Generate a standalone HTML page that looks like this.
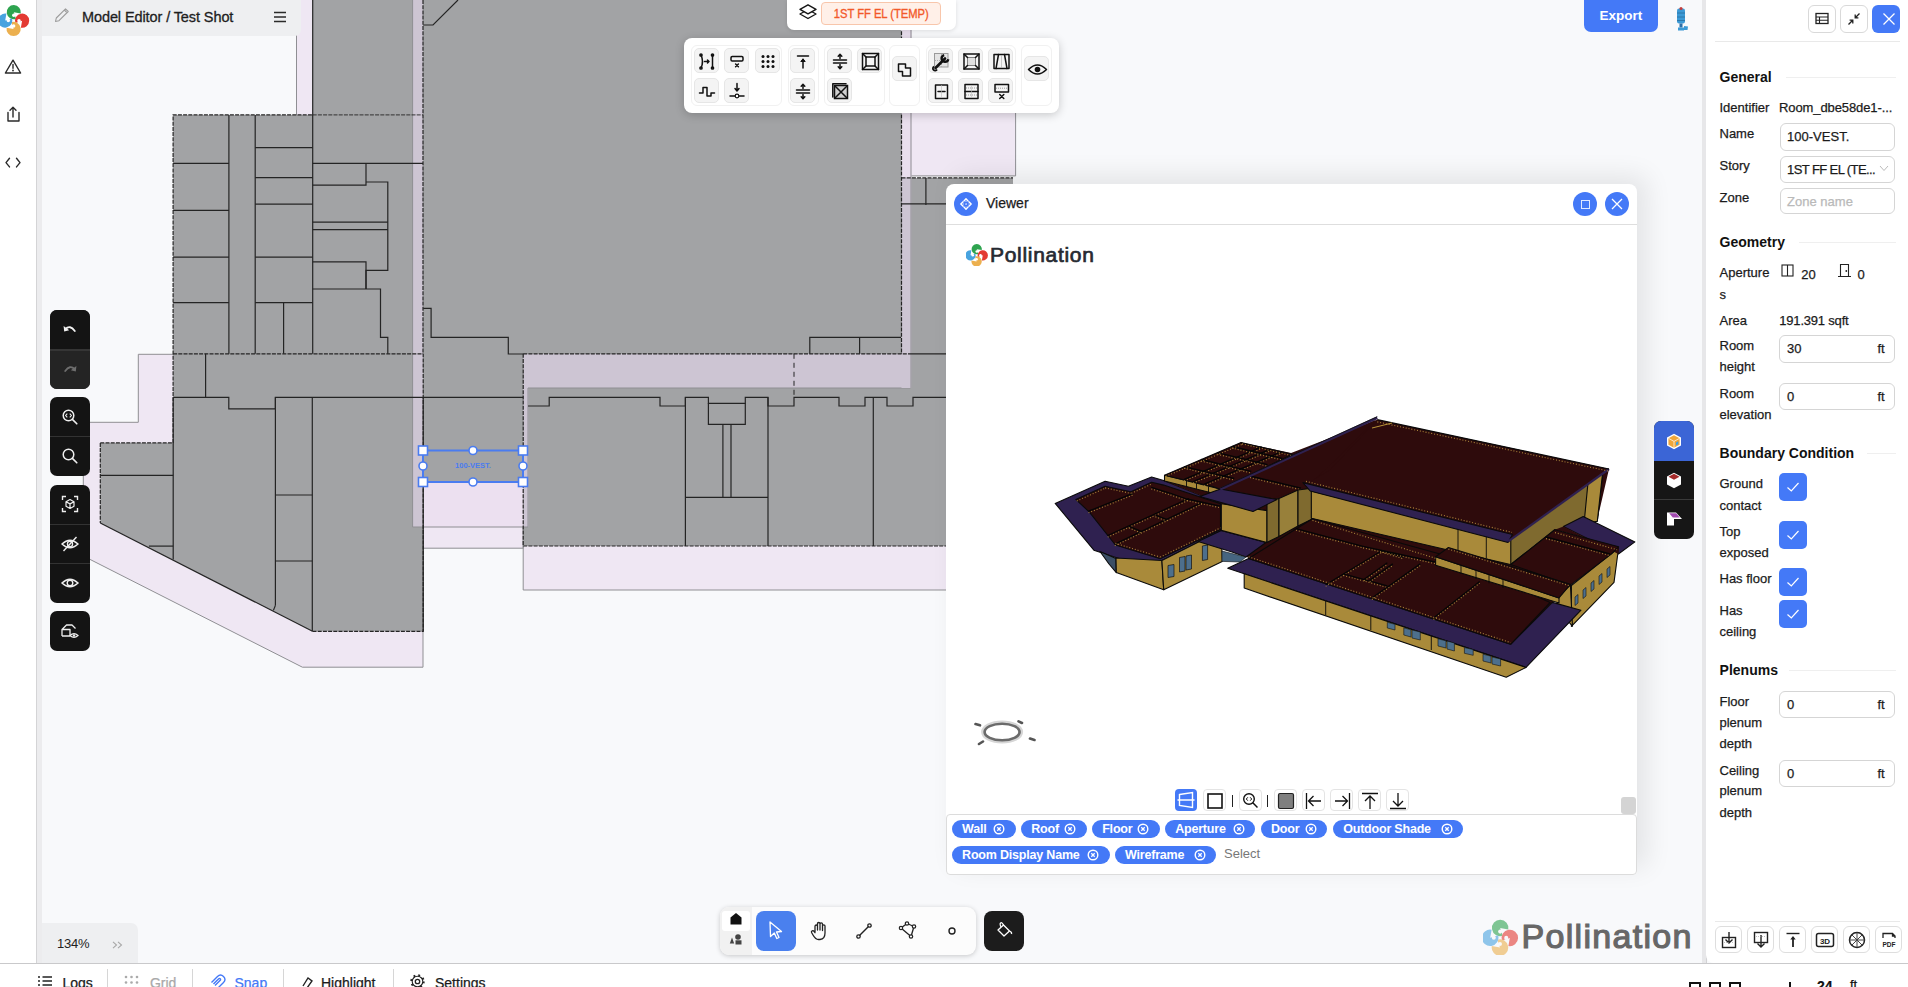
<!DOCTYPE html>
<html><head><meta charset="utf-8">
<style>
*{box-sizing:border-box;margin:0;padding:0}
html,body{width:1908px;height:987px;overflow:hidden;background:#f8f9fb;font-family:"Liberation Sans",sans-serif;color:#1b1b1b;position:relative}
.abs{position:absolute}
svg{display:block}
#sidebar{left:0;top:0;width:37px;height:963px;background:#fff;border-right:1px solid #d4d4d6}
#sidestrip{left:37px;top:0;width:5px;height:963px;background:#ececee}
#plan{left:0;top:0}
#hdr{left:42px;top:0;width:259px;height:36px;background:#eeeff1;border-bottom-right-radius:6px}
#hdr .t{position:absolute;left:40px;top:9px;font-size:14.5px;color:#1e1e1e;letter-spacing:-0.1px;white-space:nowrap;-webkit-text-stroke:0.3px #1e1e1e}
#story{left:787px;top:0;width:169px;height:30px;background:#fff;border-bottom-left-radius:7px;border-bottom-right-radius:7px;box-shadow:0 1px 4px rgba(0,0,0,.12)}
#badge{position:absolute;left:34px;top:2px;width:120px;height:23px;background:#fff0e8;border:1px solid #f8c6ab;border-radius:4px;color:#f2592a;font-size:13px;text-align:center;line-height:21px;white-space:nowrap}
#tools{left:684px;top:38px;width:375px;height:75px;background:#fff;border-radius:8px;box-shadow:0 2px 10px rgba(0,0,0,.2)}
.tg{position:absolute;top:7px;height:61px;border:1px solid #f1f1f1;border-radius:6px}
.tb{position:absolute;width:25px;height:25px;background:#f4f4f4;border:1px solid #e6e6e6;border-radius:5px}
.tb svg{position:absolute;left:2px;top:2px}
#viewer{left:946px;top:184px;width:691px;height:691px;background:#fff;border-radius:8px 8px 4px 4px;box-shadow:10px -8px 26px rgba(0,0,0,.085)}
#rpanel{left:1706px;top:0;width:202px;height:963px;background:#fff;border-bottom-left-radius:8px}
#rstrip{left:1702px;top:0;width:5px;height:963px;background:#e7e7e9;border-right:1px solid #d2d2d4}
#status{left:0;top:963px;width:1908px;height:24px;background:#fff;border-top:1px solid #c9c9cb}
#zoomb{left:42px;top:923px;width:96px;height:40px;background:#eeeff1;border-top-right-radius:7px}
#export{left:1584px;top:0;width:74px;height:32px;background:#4479f7;border-radius:0 0 7px 7px;color:#fff;font-size:13.5px;font-weight:bold;text-align:center;line-height:32px}
.lg{position:absolute;left:50px;width:40px;background:#141414;border-radius:7px;overflow:hidden}
.lb{position:relative;height:39px;display:flex;align-items:center;justify-content:center}
.lb + .lb{border-top:1px solid #333}
#btools{left:720px;top:907px;width:256px;height:48px;background:#fcfcfc;border-radius:9px;box-shadow:0 1px 5px rgba(0,0,0,.2)}
#paint{left:984px;top:911px;width:40px;height:40px;background:#1c1c1c;border-radius:8px}
#vgroup{left:1654px;top:421px;width:40px;height:118px;background:#161616;border-radius:7px;overflow:hidden}
.vb{position:absolute;top:605px;width:23px;height:22px;border:1px solid #e4e4e4;border-radius:4px;background:#fff}
.vb svg{position:absolute;left:0;top:0}
.tag{position:absolute;height:17.7px;background:#4479f7;border-radius:9px;color:#fff;font-size:12.5px;font-weight:bold;display:flex;align-items:center;justify-content:space-between;padding:0 10.5px 0 10px;white-space:nowrap;letter-spacing:-0.2px}
.tag svg{flex:none}
</style></head><body>
<svg id="plan" class="abs" width="1908" height="987" viewBox="0 0 1908 987">
<polygon points="138.3,354.3 423,354.3 423,667.2 302.4,667.2 83.3,556 83.3,422.3 138.3,422.3" fill="#efe7f3" stroke="#8f8f93" stroke-width="1" />
<rect x="296" y="0" width="17" height="115" fill="#efe7f3" />
<line x1="296.5" y1="0" x2="296.5" y2="115" stroke="#8f8f93" stroke-width="1" />
<polygon points="902.6,60 1015.6,60 1015.6,175.9 902.6,175.9" fill="#efe7f3" stroke="#8f8f93" stroke-width="1" />
<polygon points="423.2,482 523.2,482 523.2,590 1000,590 1000,540 523.2,540 523.2,548.2 423.2,548.2" fill="#efe7f3" stroke="#8f8f93" stroke-width="1" />
<rect x="423.2" y="482.3" width="100" height="45" fill="#ece0f0" />
<line x1="423.2" y1="527" x2="523.2" y2="527" stroke="#8f8f93" stroke-width="1" />
<polygon points="173.1,114.9 312.7,114.9 312.7,0 901.5,0 901.5,177.9 1013,177.9 1013,546 523.2,546 523.2,482.3 423.2,482.3 423.2,631.3 312.5,631.3 100.3,523 100.3,442.9 173.2,442.9" fill="#a2a3a5" stroke="none" stroke-width="1" />
<rect x="412.6" y="0" width="10.4" height="527" fill="#cdc5d3" />
<line x1="412.6" y1="0" x2="412.6" y2="527" stroke="#8f8f93" stroke-width="1" />
<line x1="412.6" y1="527" x2="423.2" y2="527" stroke="#8f8f93" stroke-width="1" />
<rect x="523.2" y="354" width="387" height="34" fill="#cdc5d3" />
<rect x="523.2" y="388" width="5.3" height="139" fill="#cdc5d3" />
<line x1="528" y1="388" x2="910.5" y2="388" stroke="#8f8f93" stroke-width="1" />
<line x1="528" y1="388" x2="528" y2="527" stroke="#8f8f93" stroke-width="1" />
<line x1="523.2" y1="527" x2="528" y2="527" stroke="#8f8f93" stroke-width="1" />
<rect x="901.5" y="0" width="10" height="178" fill="#e9deed" />
<rect x="901.5" y="178" width="10" height="210" fill="#cdc5d3" />
<line x1="911" y1="0" x2="911" y2="388" stroke="#8f8f93" stroke-width="1" />
<polyline points="173.1,442.9 173.1,114.9 312.7,114.9" fill="none" stroke="#242424" stroke-width="1.2" stroke-dasharray="4 1.2"/>
<line x1="100.3" y1="442.9" x2="173.2" y2="442.9" stroke="#242424" stroke-width="1.2" stroke-dasharray="4 1.2"/>
<line x1="100.3" y1="442.9" x2="100.3" y2="523" stroke="#242424" stroke-width="1.2" stroke-dasharray="4 1.2"/>
<line x1="100.3" y1="523" x2="312.5" y2="631.3" stroke="#242424" stroke-width="1.2" />
<polyline points="312.5,631.3 423.2,631.3 423.2,354" fill="none" stroke="#242424" stroke-width="1.2" stroke-dasharray="4 1.2"/>
<line x1="312.7" y1="0" x2="312.7" y2="114.9" stroke="#242424" stroke-width="1.2" />
<line x1="312.7" y1="114.9" x2="423" y2="114.9" stroke="#242424" stroke-width="0.9" stroke-dasharray="4 1.2"/>
<line x1="423" y1="0" x2="423" y2="354" stroke="#242424" stroke-width="1.2" stroke-dasharray="4 1.2"/>
<line x1="173.1" y1="353.8" x2="423" y2="353.8" stroke="#242424" stroke-width="1.2" stroke-dasharray="4 1.2"/>
<line x1="523.2" y1="353.8" x2="910" y2="353.8" stroke="#242424" stroke-width="1.2" stroke-dasharray="4 1.2"/>
<line x1="523.2" y1="353.8" x2="523.2" y2="546" stroke="#242424" stroke-width="1.2" stroke-dasharray="4 1.2"/>
<line x1="523.2" y1="546" x2="946" y2="546" stroke="#242424" stroke-width="1.2" stroke-dasharray="4 1.2"/>
<line x1="901.5" y1="0" x2="901.5" y2="354" stroke="#242424" stroke-width="1.2" stroke-dasharray="4 1.2"/>
<line x1="901.5" y1="177.9" x2="1013" y2="177.9" stroke="#242424" stroke-width="1.2" stroke-dasharray="4 1.2"/>
<line x1="228.9" y1="114.9" x2="228.9" y2="353.8" stroke="#242424" stroke-width="1.2" />
<line x1="255.2" y1="114.9" x2="255.2" y2="353.8" stroke="#242424" stroke-width="1.2" />
<line x1="312.7" y1="114.9" x2="312.7" y2="353.8" stroke="#242424" stroke-width="1.2" />
<line x1="173.1" y1="163.4" x2="228.9" y2="163.4" stroke="#242424" stroke-width="1.2" />
<line x1="173.1" y1="210.4" x2="228.9" y2="210.4" stroke="#242424" stroke-width="1.2" />
<line x1="173.1" y1="257.1" x2="228.9" y2="257.1" stroke="#242424" stroke-width="1.2" />
<line x1="173.1" y1="302.7" x2="228.9" y2="302.7" stroke="#242424" stroke-width="1.2" />
<line x1="255.2" y1="147.7" x2="312.7" y2="147.7" stroke="#242424" stroke-width="1.2" />
<line x1="255.2" y1="177.6" x2="312.7" y2="177.6" stroke="#242424" stroke-width="1.2" />
<line x1="255.2" y1="204.2" x2="312.7" y2="204.2" stroke="#242424" stroke-width="1.2" />
<line x1="255.2" y1="257.1" x2="312.7" y2="257.1" stroke="#242424" stroke-width="1.2" />
<line x1="255.2" y1="302.7" x2="312.7" y2="302.7" stroke="#242424" stroke-width="1.2" />
<line x1="283.6" y1="302.7" x2="283.6" y2="353.8" stroke="#242424" stroke-width="1.2" />
<line x1="312.7" y1="163.3" x2="423" y2="163.3" stroke="#242424" stroke-width="1.2" />
<polyline points="312.7,185.2 366,185.2 366,163.3" fill="none" stroke="#242424" stroke-width="1.2" />
<polyline points="366,182 387.8,182 387.8,270.3 366,270.3 366,289" fill="none" stroke="#242424" stroke-width="1.2" />
<line x1="312.7" y1="222.1" x2="387.8" y2="222.1" stroke="#242424" stroke-width="1.2" />
<line x1="312.7" y1="229.7" x2="387.8" y2="229.7" stroke="#242424" stroke-width="1.2" />
<polyline points="312.7,261.8 366,261.8 366,289" fill="none" stroke="#242424" stroke-width="1.2" />
<polyline points="312.7,289 380.5,289 380.5,337.3 387.8,337.3 387.8,353.8" fill="none" stroke="#242424" stroke-width="1.2" />
<polyline points="423.2,25 433,25 458,0" fill="none" stroke="#242424" stroke-width="1.2" />
<polyline points="423.2,308.3 431.1,308.3 431.1,337.3 508.3,337.3 508.3,354 523.2,354" fill="none" stroke="#242424" stroke-width="1.2" />
<polyline points="809.8,353.8 809.8,337.4 901,337.4" fill="none" stroke="#242424" stroke-width="1.2" />
<line x1="859.6" y1="337.4" x2="859.6" y2="353.8" stroke="#242424" stroke-width="1.2" />
<line x1="910" y1="353.8" x2="946" y2="353.8" stroke="#242424" stroke-width="1.2" />
<line x1="205.6" y1="353.8" x2="205.6" y2="397.3" stroke="#242424" stroke-width="1.2" />
<polyline points="173.1,397.3 228.8,397.3 228.8,408.9 275.4,408.9 275.4,397.3 523.2,397.3" fill="none" stroke="#242424" stroke-width="1.2" />
<line x1="275.4" y1="397.3" x2="275.4" y2="605.4" stroke="#242424" stroke-width="1.2" />
<line x1="275.4" y1="605.4" x2="273.4" y2="610.4" stroke="#242424" stroke-width="1.2" />
<line x1="312.3" y1="397.3" x2="312.3" y2="631.3" stroke="#242424" stroke-width="1.2" />
<line x1="275.4" y1="495" x2="312.3" y2="495" stroke="#242424" stroke-width="1.2" />
<line x1="275.4" y1="561" x2="312.3" y2="561" stroke="#242424" stroke-width="1.2" />
<line x1="173.2" y1="397.3" x2="173.2" y2="559.4" stroke="#242424" stroke-width="1.2" />
<line x1="148.9" y1="546.1" x2="173.2" y2="546.1" stroke="#242424" stroke-width="1.2" />
<line x1="100.3" y1="475.3" x2="173.2" y2="475.3" stroke="#242424" stroke-width="1.2" />
<line x1="423.2" y1="397.3" x2="423.2" y2="631.3" stroke="#242424" stroke-width="1.2" />
<polyline points="528,406 549.2,406 549.2,397.3 660,397.3 660,406 685.4,406 685.4,397.3 708.4,397.3 708.4,403.3 745.3,403.3 745.3,397.3 768,397.3 768,406 794,406 794,397.3 839,397.3 839,406 865,406 865,397.3 887,397.3 887,406 913,406 913,397.3 946,397.3" fill="none" stroke="#242424" stroke-width="1.2" />
<line x1="794" y1="353.8" x2="794" y2="397.3" stroke="#242424" stroke-width="1" stroke-dasharray="5 4"/>
<line x1="685.4" y1="397.3" x2="685.4" y2="546" stroke="#242424" stroke-width="1.2" />
<line x1="768" y1="397.3" x2="768" y2="546" stroke="#242424" stroke-width="1.2" />
<line x1="873.3" y1="397.3" x2="873.3" y2="546" stroke="#242424" stroke-width="1.2" />
<polyline points="708.4,403.3 708.4,424.3 745.3,424.3 745.3,403.3" fill="none" stroke="#242424" stroke-width="1.2" />
<line x1="722.9" y1="424.3" x2="722.9" y2="497.4" stroke="#242424" stroke-width="1.2" />
<line x1="731" y1="424.3" x2="731" y2="497.4" stroke="#242424" stroke-width="1.2" />
<line x1="685.4" y1="497.4" x2="768" y2="497.4" stroke="#242424" stroke-width="1.2" />
<line x1="925.9" y1="177.9" x2="925.9" y2="205" stroke="#242424" stroke-width="1.2" />
<line x1="901.5" y1="203.9" x2="946" y2="203.9" stroke="#242424" stroke-width="1.2" />
<rect x="423" y="450.5" width="100" height="31.5" fill="none" stroke="#4a7cf0" stroke-width="2"/>
<rect x="418.5" y="446.0" width="9" height="9" fill="#fff" stroke="#4a7cf0" stroke-width="1.6"/>
<rect x="518.5" y="446.0" width="9" height="9" fill="#fff" stroke="#4a7cf0" stroke-width="1.6"/>
<rect x="418.5" y="477.5" width="9" height="9" fill="#fff" stroke="#4a7cf0" stroke-width="1.6"/>
<rect x="518.5" y="477.5" width="9" height="9" fill="#fff" stroke="#4a7cf0" stroke-width="1.6"/>
<circle cx="473" cy="450.5" r="4" fill="#fff" stroke="#4a7cf0" stroke-width="1.6"/>
<circle cx="473" cy="482" r="4" fill="#fff" stroke="#4a7cf0" stroke-width="1.6"/>
<circle cx="423" cy="466" r="4" fill="#fff" stroke="#4a7cf0" stroke-width="1.6"/>
<circle cx="523" cy="466" r="4" fill="#fff" stroke="#4a7cf0" stroke-width="1.6"/>
<text x="473" y="468" font-family="Liberation Sans" font-size="7.5" font-weight="bold" fill="#4a7cf0" text-anchor="middle">100-VEST.</text>
</svg>
<div id="sidebar" class="abs">
 <svg width="37" height="180" viewBox="0 0 37 180">
  <g><path d="M13.80 12.20 L15.99 18.95 A7.1 7.1 0 1 1 20.79 13.43 Z" fill="#2ea44f"/><circle cx="13.80" cy="15.30" r="1.75" fill="#fff"/><path d="M22.10 20.70 L15.35 22.89 A7.1 7.1 0 1 1 20.87 27.69 Z" fill="#e33a32"/><circle cx="19.00" cy="20.70" r="1.75" fill="#fff"/><path d="M13.60 29.00 L11.41 22.25 A7.1 7.1 0 1 1 6.61 27.77 Z" fill="#ecb04f"/><circle cx="13.60" cy="25.90" r="1.75" fill="#fff"/><path d="M5.20 20.60 L11.95 18.41 A7.1 7.1 0 1 1 6.43 13.61 Z" fill="#48a3df"/><circle cx="8.30" cy="20.60" r="1.75" fill="#fff"/></g>
  <g fill="none" stroke="#2a2a2a" stroke-width="1.4" stroke-linejoin="round" stroke-linecap="round">
   <path d="M13 60.2 L20.6 73 H5.4 Z"/>
   <path d="M13 64.5 V68.2"/>
   <path d="M8 112.5 V121 H19 V112.5" /><path d="M13 117 V107.5 M10 110.3 L13 107.3 L16 110.3"/>
   <path d="M9.5 158.3 L6 162.6 L9.5 166.9 M16.5 158.3 L20 162.6 L16.5 166.9"/>
  </g>
  <circle cx="13" cy="70.5" r="0.9" fill="#2a2a2a"/>
 </svg>
</div>
<div id="sidestrip" class="abs"></div>
<div id="hdr" class="abs">
 <svg class="abs" style="left:11px;top:6px" width="18" height="18" viewBox="0 0 18 18"><path d="M2.5 15.5 L3.3 12 L12.5 2.8 L15.2 5.5 L6 14.7 Z M11.3 4 L14 6.7" fill="none" stroke="#9c9c9c" stroke-width="1.1" stroke-linejoin="round"/></svg>
 <div class="t">Model Editor / Test Shot</div>
 <svg class="abs" style="left:231px;top:11px" width="14" height="12" viewBox="0 0 14 12"><path d="M1 1.5H13M1 6H13M1 10.5H13" stroke="#2a2a2a" stroke-width="1.3"/></svg>
</div>
<div id="story" class="abs">
 <svg class="abs" style="left:11px;top:3px" width="20" height="18" viewBox="0 0 20 18"><path d="M10 6.5 L18 11 L10 15.5 L2 11 Z" fill="#fff" stroke="#151515" stroke-width="1.4" stroke-linejoin="round"/><path d="M10 1.8 L18 6.3 L10 10.8 L2 6.3 Z" fill="#fff" stroke="#151515" stroke-width="1.4" stroke-linejoin="round"/></svg>
 <div id="badge"><span style="display:inline-block;transform:scaleX(0.86);transform-origin:center;-webkit-text-stroke:0.35px #f2592a;position:relative;top:-0.5px">1ST FF EL (TEMP)</span></div>
</div>
<div id="tools" class="abs"><div class="tg" style="left:7.4px;width:91px"></div>
<div class="tg" style="left:103.6px;width:31px"></div>
<div class="tg" style="left:139.5px;width:61px"></div>
<div class="tg" style="left:205px;width:31px"></div>
<div class="tg" style="left:241.5px;width:90.5px"></div>
<div class="tg" style="left:337.3px;width:31px"></div>
<div class="tb" style="left:10.4px;top:10.4px"><svg width="21" height="21" viewBox="0 0 21 21"><path d="M4 4 Q7 10.5 4 17" fill="none" stroke="#111" stroke-width="1.5" stroke-linecap="round" stroke-linejoin="round"/><circle cx="4" cy="4" r="1.1" fill="none" stroke="#111" stroke-width="1.5" stroke-linecap="round" stroke-linejoin="round"/><circle cx="4" cy="17" r="1.1" fill="none" stroke="#111" stroke-width="1.5" stroke-linecap="round" stroke-linejoin="round"/><path d="M7.5 10.5 H12 M10.5 9 L12 10.5 L10.5 12" fill="none" stroke="#111" stroke-width="1.5" stroke-linecap="round" stroke-linejoin="round" stroke-width="1.1"/><path d="M15.5 4 V17" fill="none" stroke="#111" stroke-width="1.5" stroke-linecap="round" stroke-linejoin="round"/><circle cx="15.5" cy="4" r="1.1" fill="none" stroke="#111" stroke-width="1.5" stroke-linecap="round" stroke-linejoin="round"/><circle cx="15.5" cy="17" r="1.1" fill="none" stroke="#111" stroke-width="1.5" stroke-linecap="round" stroke-linejoin="round"/></svg></div>
<div class="tb" style="left:40.3px;top:10.4px"><svg width="21" height="21" viewBox="0 0 21 21"><rect x="4" y="5.5" width="12" height="4.5" rx="1.2" fill="none" stroke="#111" stroke-width="1.5" stroke-linecap="round" stroke-linejoin="round" stroke-width="1.8"/><path d="M8.6 13 L11.4 15.8 M11.4 13 L8.6 15.8" fill="none" stroke="#111" stroke-width="1.5" stroke-linecap="round" stroke-linejoin="round" stroke-width="1.4"/></svg></div>
<div class="tb" style="left:70.6px;top:10.4px"><svg width="21" height="21" viewBox="0 0 21 21"><circle cx="5" cy="5.5" r="1.5" fill="#111"/><circle cx="5" cy="10.5" r="1.5" fill="#111"/><circle cx="5" cy="15.5" r="1.5" fill="#111"/><circle cx="10" cy="5.5" r="1.5" fill="#111"/><circle cx="10" cy="10.5" r="1.5" fill="#111"/><circle cx="10" cy="15.5" r="1.5" fill="#111"/><circle cx="15" cy="5.5" r="1.5" fill="#111"/><circle cx="15" cy="10.5" r="1.5" fill="#111"/><circle cx="15" cy="15.5" r="1.5" fill="#111"/></svg></div>
<div class="tb" style="left:10.4px;top:39.8px"><svg width="21" height="21" viewBox="0 0 21 21"><path d="M2.5 12 H6 V6.5 H10 V15 H14 V12 H17.5" fill="none" stroke="#111" stroke-width="1.5" stroke-linecap="round" stroke-linejoin="round" stroke-width="1.6"/></svg></div>
<div class="tb" style="left:40.3px;top:39.8px"><svg width="21" height="21" viewBox="0 0 21 21"><path d="M10 2.5 V10 M8 7.5 L10 10 L12 7.5" fill="none" stroke="#111" stroke-width="1.5" stroke-linecap="round" stroke-linejoin="round" stroke-width="1.3"/><path d="M3 15 H17" fill="none" stroke="#111" stroke-width="1.5" stroke-linecap="round" stroke-linejoin="round" stroke-width="1.4"/><circle cx="10" cy="15" r="1.8" fill="#fff" stroke="#111" stroke-width="1.2"/></svg></div>
<div class="tb" style="left:106.4px;top:10.4px"><svg width="21" height="21" viewBox="0 0 21 21"><path d="M4.5 5 H15.5" fill="none" stroke="#111" stroke-width="1.5" stroke-linecap="round" stroke-linejoin="round" stroke-width="1.6"/><path d="M10 17 V8.5" fill="none" stroke="#111" stroke-width="1.5" stroke-linecap="round" stroke-linejoin="round" stroke-width="1.8"/><path d="M7.8 10.5 L10 7.8 L12.2 10.5 Z" fill="#111" stroke="#111" stroke-width="1"/></svg></div>
<div class="tb" style="left:106.4px;top:39.8px"><svg width="21" height="21" viewBox="0 0 21 21"><path d="M3.5 9 H16.5 M3.5 12 H16.5" fill="none" stroke="#111" stroke-width="1.5" stroke-linecap="round" stroke-linejoin="round" stroke-width="1.3"/><path d="M10 7.5 V3.5 M8.2 5.2 L10 3.3 L11.8 5.2 M10 13.5 V17.5 M8.2 15.8 L10 17.7 L11.8 15.8" fill="none" stroke="#111" stroke-width="1.5" stroke-linecap="round" stroke-linejoin="round" stroke-width="1.3"/></svg></div>
<div class="tb" style="left:142.5px;top:10.4px"><svg width="21" height="21" viewBox="0 0 21 21"><path d="M3.5 9 H16.5 M3.5 12 H16.5" fill="none" stroke="#111" stroke-width="1.5" stroke-linecap="round" stroke-linejoin="round" stroke-width="1.3"/><path d="M10 7.5 V3.5 M8.2 5.2 L10 3.3 L11.8 5.2 M10 13.5 V17.5 M8.2 15.8 L10 17.7 L11.8 15.8" fill="none" stroke="#111" stroke-width="1.5" stroke-linecap="round" stroke-linejoin="round" stroke-width="1.3"/></svg></div>
<div class="tb" style="left:172.8px;top:10.4px"><svg width="21" height="21" viewBox="0 0 21 21"><rect x="2.5" y="2.5" width="16" height="16" fill="none" stroke="#111" stroke-width="1.5" stroke-linecap="round" stroke-linejoin="round" stroke-width="1.4"/><rect x="6" y="6" width="9" height="9" fill="none" stroke="#111" stroke-width="1.5" stroke-linecap="round" stroke-linejoin="round" stroke-width="1.1"/><path d="M2.5 2.5 L6 6 M18.5 2.5 L15 6 M2.5 18.5 L6 15 M18.5 18.5 L15 15" fill="none" stroke="#111" stroke-width="1.5" stroke-linecap="round" stroke-linejoin="round" stroke-width="0.9"/></svg></div>
<div class="tb" style="left:142.5px;top:39.8px"><svg width="21" height="21" viewBox="0 0 21 21"><rect x="4.5" y="4.5" width="13" height="13" fill="#cfcfcf" stroke="#111" stroke-width="1.5"/><path d="M2.8 2.8 V16 M2.8 2.8 H16" fill="none" stroke="#111" stroke-width="1.5" stroke-linecap="round" stroke-linejoin="round" stroke-width="1"/><path d="M5 5 L17 17 M17 5 L5 17" fill="none" stroke="#111" stroke-width="1.5" stroke-linecap="round" stroke-linejoin="round" stroke-width="0.9" stroke="#333"/></svg></div>
<div class="tb" style="left:208.4px;top:17.5px"><svg width="21" height="21" viewBox="0 0 21 21"><path d="M3.5 5 H10.5 V9 H15.5 V17 H7.5 V12.5 H3.5 Z" fill="none" stroke="#111" stroke-width="1.5" stroke-linecap="round" stroke-linejoin="round" stroke-width="1.8"/></svg></div>
<div class="tb" style="left:244.3px;top:10.4px"><svg width="21" height="21" viewBox="0 0 21 21"><rect x="3.5" y="2.5" width="13.5" height="13.5" fill="#e4e4e4" stroke="#9a9a9a" stroke-width="1"/><path d="M4 9.5 H16 M10.5 3 V15.5" stroke="#888" stroke-width="0.6" stroke-dasharray="1 1"/><path d="M4.5 17 L14 7.5" stroke="#111" stroke-width="2.6" stroke-linecap="round"/><path d="M13.2 4.2 A3.4 3.4 0 1 0 17.3 8.3" fill="none" stroke="#111" stroke-width="2.4"/><path d="M3 15.5 A2.2 2.2 0 1 0 6 18.5" fill="none" stroke="#111" stroke-width="1.8"/></svg></div>
<div class="tb" style="left:274.4px;top:10.4px"><svg width="21" height="21" viewBox="0 0 21 21"><rect x="3" y="3" width="15" height="15" fill="none" stroke="#111" stroke-width="1.5" stroke-linecap="round" stroke-linejoin="round" stroke-width="1.8"/><rect x="6.5" y="6.5" width="8" height="8" fill="#e0e0e0" stroke="#555" stroke-width="0.7"/><path d="M3 3 L6.5 6.5 M18 3 L14.5 6.5 M3 18 L6.5 14.5 M18 18 L14.5 14.5" fill="none" stroke="#111" stroke-width="1.5" stroke-linecap="round" stroke-linejoin="round" stroke-width="1.2"/></svg></div>
<div class="tb" style="left:304.3px;top:10.4px"><svg width="21" height="21" viewBox="0 0 21 21"><rect x="3" y="3.5" width="15" height="14" fill="none" stroke="#111" stroke-width="1.5" stroke-linecap="round" stroke-linejoin="round" stroke-width="1.6"/><path d="M7.5 3.5 L5 17.5 M13.5 3.5 L16 17.5" fill="none" stroke="#111" stroke-width="1.5" stroke-linecap="round" stroke-linejoin="round" stroke-width="0.8" stroke="#444"/><path d="M10.5 4 V17" stroke="#aaa" stroke-width="0.6"/></svg></div>
<div class="tb" style="left:244.3px;top:39.8px"><svg width="21" height="21" viewBox="0 0 21 21"><rect x="4.5" y="4" width="12" height="13.5" fill="none" stroke="#111" stroke-width="1.5" stroke-linecap="round" stroke-linejoin="round" stroke-width="1.5"/><path d="M7 10.5 H14" fill="none" stroke="#111" stroke-width="1.5" stroke-linecap="round" stroke-linejoin="round" stroke-width="2"/><path d="M10.5 4 V17" stroke="#bbb" stroke-width="0.6"/></svg></div>
<div class="tb" style="left:274.4px;top:39.8px"><svg width="21" height="21" viewBox="0 0 21 21"><rect x="4" y="3.5" width="13" height="14" fill="none" stroke="#111" stroke-width="1.5" stroke-linecap="round" stroke-linejoin="round" stroke-width="1.5"/><path d="M4 10.5 H17" fill="none" stroke="#111" stroke-width="1.5" stroke-linecap="round" stroke-linejoin="round" stroke-width="1.5"/><path d="M5 7 H16 M5 14 H16" stroke="#777" stroke-width="0.7" stroke-dasharray="1 1"/><path d="M10.5 4 V17" stroke="#bbb" stroke-width="0.6"/></svg></div>
<div class="tb" style="left:304.3px;top:39.8px"><svg width="21" height="21" viewBox="0 0 21 21"><rect x="4" y="3.5" width="13.5" height="7.5" fill="none" stroke="#111" stroke-width="1.5" stroke-linecap="round" stroke-linejoin="round" stroke-width="1.5"/><path d="M5 7.2 H16.5" stroke="#777" stroke-width="0.7" stroke-dasharray="1 1"/><path d="M8.7 13.5 L12.8 17.5 M12.8 13.5 L8.7 17.5" fill="none" stroke="#111" stroke-width="1.5" stroke-linecap="round" stroke-linejoin="round" stroke-width="1.8"/></svg></div>
<div class="tb" style="left:340.2px;top:17.5px"><svg width="21" height="21" viewBox="0 0 21 21"><path d="M1.5 10.5 Q10.5 1.5 19.5 10.5 Q10.5 19.5 1.5 10.5 Z" fill="none" stroke="#111" stroke-width="1.5" stroke-linecap="round" stroke-linejoin="round" stroke-width="1.5"/><circle cx="10.5" cy="10.5" r="2.8" fill="#111"/></svg></div>
</div>
<div class="lg" style="top:310px;height:79px">
 <div class="lb" style="height:39px;background:#141414"><svg width="18" height="18" viewBox="0 0 18 18"><path d="M4.5 8 Q9 3.5 13.8 10" fill="none" stroke="#f2f2f2" stroke-width="1.8" stroke-linecap="round"/><path d="M2.6 5 L3.2 10.6 L8.2 9.2 Z" fill="#f2f2f2"/></svg></div>
 <div class="lb" style="height:40px;background:#242424;border-top:2px solid #353535"><svg width="18" height="18" viewBox="0 0 18 18"><path d="M13.5 8 Q9 3.5 4.2 10" fill="none" stroke="#6e6e6e" stroke-width="1.8" stroke-linecap="round"/><path d="M15.4 5 L14.8 10.6 L9.8 9.2 Z" fill="#6e6e6e"/></svg></div>
</div>
<div class="lg" style="top:397px;height:79px">
 <div class="lb"><svg width="18" height="18" viewBox="0 0 18 18"><circle cx="7.5" cy="7.5" r="5.3" fill="none" stroke="#eee" stroke-width="1.5"/><path d="M11.4 11.4 L15.8 15.8" stroke="#eee" stroke-width="1.6" stroke-linecap="round"/><path d="M6.3 5.6 L4.6 7.5 L6.3 9.4 M8.7 5.6 L10.4 7.5 L8.7 9.4" fill="none" stroke="#eee" stroke-width="1.1"/></svg></div>
 <div class="lb"><svg width="18" height="18" viewBox="0 0 18 18"><circle cx="7.5" cy="7.5" r="5.3" fill="none" stroke="#eee" stroke-width="1.5"/><path d="M11.4 11.4 L15.8 15.8" stroke="#eee" stroke-width="1.6" stroke-linecap="round"/></svg></div>
</div>
<div class="lg" style="top:484.5px;height:118px">
 <div class="lb"><svg width="18" height="18" viewBox="0 0 18 18"><path d="M1.5 5 V1.5 H5 M13 1.5 H16.5 V5 M16.5 13 V16.5 H13 M5 16.5 H1.5 V13" fill="none" stroke="#eee" stroke-width="1.4"/><path d="M9 4.5 L13 6.7 V11.3 L9 13.5 L5 11.3 V6.7 Z M5 6.7 L9 8.9 L13 6.7 M9 8.9 V13.5" fill="none" stroke="#eee" stroke-width="1.2" stroke-linejoin="round"/></svg></div>
 <div class="lb"><svg width="20" height="18" viewBox="0 0 20 18"><path d="M2 9 Q10 1.5 18 9 Q10 16.5 2 9 Z" fill="none" stroke="#eee" stroke-width="1.4"/><circle cx="10" cy="9" r="2.6" fill="none" stroke="#eee" stroke-width="1.3"/><path d="M3.5 16 L16.5 2" stroke="#eee" stroke-width="1.4"/></svg></div>
 <div class="lb"><svg width="20" height="18" viewBox="0 0 20 18"><path d="M2 9 Q10 1.5 18 9 Q10 16.5 2 9 Z" fill="none" stroke="#eee" stroke-width="1.5"/><circle cx="10" cy="9" r="2.8" fill="none" stroke="#eee" stroke-width="1.4"/></svg></div>
</div>
<div class="lg" style="top:610.5px;height:40px">
 <div class="lb" style="height:40px"><svg width="20" height="18" viewBox="0 0 20 18"><path d="M2 14 V7.5 L6.5 3 H12 L15.5 6.5 M2 7.5 H10 V14 H2" fill="none" stroke="#eee" stroke-width="1.3" stroke-linejoin="round"/><path d="M10 13.5 Q14 9.8 18 13.5 Q14 17.2 10 13.5 Z" fill="#141414" stroke="#eee" stroke-width="1.2"/><circle cx="14" cy="13.5" r="1.2" fill="#eee"/></svg></div>
</div>

<div id="zoomb" class="abs"><div style="position:absolute;left:15px;top:13px;font-size:13px;color:#222;letter-spacing:-0.2px">134%</div>
<svg style="position:absolute;left:70px;top:18px" width="12" height="8" viewBox="0 0 12 8"><path d="M1 0.8 L4.5 4 L1 7.2 M6 0.8 L9.5 4 L6 7.2" fill="none" stroke="#a8a8a8" stroke-width="1.1"/></svg>
</div>
<div id="btools" class="abs"><div style="position:absolute;left:0;top:0;width:32px;height:48px;background:#f1f1f1;border-radius:9px 0 0 9px"></div>
<div style="position:absolute;left:2px;top:4px;width:28px;height:20px;background:#fff;border-radius:3px"></div>
<svg style="position:absolute;left:9px;top:5px" width="14" height="14" viewBox="0 0 14 14"><path d="M1.5 5.5 L7 1 L12.5 5.5 V12.5 H1.5 Z" fill="#111"/></svg>
<svg style="position:absolute;left:9px;top:25px" width="14" height="14" viewBox="0 0 14 14"><path d="M0.8 11.5 L3 5.5 L5.2 11.5 Z" fill="#444"/><circle cx="9" cy="5" r="2.8" fill="#444"/><rect x="6.5" y="8.3" width="6" height="4.2" fill="#444"/></svg>
<div style="position:absolute;left:36px;top:4px;width:40px;height:40px;background:#4a80ee;border-radius:8px"></div>
<svg style="position:absolute;left:45px;top:12px" width="22" height="24" viewBox="0 0 22 24"><path d="M5 3 L16.5 12.5 L11.5 13 L14 18.5 L11.8 19.5 L9.3 14 L5.5 17.5 Z" fill="none" stroke="#fff" stroke-width="1.3" stroke-linejoin="round"/></svg>
<svg style="position:absolute;left:89px;top:13px" width="22" height="22" viewBox="0 0 22 22"><path d="M6 12 V6.5 Q6 5 7.3 5 Q8.5 5 8.5 6.5 V10 M8.5 10 V3.8 Q8.5 2.5 9.8 2.5 Q11 2.5 11 3.8 V10 M11 10 V4 Q11 2.8 12.3 2.8 Q13.5 2.8 13.5 4 V10.5 M13.5 10.5 V6 Q13.5 4.8 14.7 4.8 Q16 4.8 16 6 V13 Q16 19 11 19.5 H9.5 Q6.5 19.5 4 15 L2.7 12.7 Q2 11.3 3.3 10.8 Q4.4 10.4 5.2 11.6 L6 12.7" fill="none" stroke="#222" stroke-width="1.3" stroke-linejoin="round" stroke-linecap="round"/></svg>
<svg style="position:absolute;left:134px;top:14px" width="20" height="20" viewBox="0 0 20 20"><path d="M5.5 14.5 L14.5 5.5" stroke="#222" stroke-width="1.4"/><circle cx="4.5" cy="15.5" r="1.7" fill="none" stroke="#222" stroke-width="1.3"/><circle cx="15.5" cy="4.5" r="1.7" fill="none" stroke="#222" stroke-width="1.3"/></svg>
<svg style="position:absolute;left:178px;top:13px" width="20" height="22" viewBox="0 0 20 22"><path d="M3 8 L9 3.5 L16 6.5 L13 16.5 Z" fill="none" stroke="#222" stroke-width="1.3" stroke-linejoin="round"/><circle cx="3" cy="8" r="1.7" fill="#fcfcfc" stroke="#222" stroke-width="1.2"/><circle cx="9" cy="3.5" r="1.7" fill="#fcfcfc" stroke="#222" stroke-width="1.2"/><circle cx="16" cy="6.5" r="1.7" fill="#fcfcfc" stroke="#222" stroke-width="1.2"/><circle cx="13" cy="16.5" r="1.7" fill="#fcfcfc" stroke="#222" stroke-width="1.2"/></svg>
<svg style="position:absolute;left:224px;top:16px" width="16" height="16" viewBox="0 0 16 16"><circle cx="8" cy="8" r="3" fill="none" stroke="#222" stroke-width="1.4"/></svg>
</div>
<div id="paint" class="abs"><svg style="position:absolute;left:10px;top:9px" width="20" height="20" viewBox="0 0 20 20"><path d="M4 10 L9.5 5 L15.5 11 L10 16 Z" fill="none" stroke="#fff" stroke-width="1.3" stroke-linejoin="round"/><path d="M9.5 5 Q8 1.8 6.5 3 Q5.5 4 7 7" fill="none" stroke="#fff" stroke-width="1.2"/><path d="M15.5 11 Q18 12 17.5 14" fill="none" stroke="#fff" stroke-width="1.3"/></svg>
</div>
<div id="viewer" class="abs"><div style="position:absolute;left:8px;top:8px;width:24px;height:24px;border-radius:50%;background:#4479f7"></div>
<svg style="position:absolute;left:13px;top:13px" width="14" height="14" viewBox="0 0 14 14"><path d="M4.6 4.4 L7 1.8 L9.4 4.4 M9.6 4.6 L12.2 7 L9.6 9.4 M9.4 9.6 L7 12.2 L4.6 9.6 M4.4 9.4 L1.8 7 L4.4 4.6" fill="none" stroke="#fff" stroke-width="1.4" stroke-linejoin="round"/><path d="M7 3.5 V10.5 M3.5 7 H10.5" stroke="#c9d8ff" stroke-width="1" stroke-dasharray="1.5 1.5"/></svg>
<div style="position:absolute;left:40px;top:11px;font-size:14px;color:#1b1b1b;-webkit-text-stroke:0.25px #1b1b1b">Viewer</div>
<div style="position:absolute;left:627px;top:8px;width:24px;height:24px;border-radius:50%;background:#4479f7"></div>
<div style="position:absolute;left:634.5px;top:15.5px;width:9px;height:9px;border:1.5px solid #dfe8ff"></div>
<div style="position:absolute;left:659px;top:8px;width:24px;height:24px;border-radius:50%;background:#4479f7"></div>
<svg style="position:absolute;left:664px;top:13px" width="14" height="14" viewBox="0 0 14 14"><path d="M2 2 L12 12 M12 2 L2 12" stroke="#fff" stroke-width="1.3"/></svg>
<div style="position:absolute;left:0;top:40px;width:691px;height:1px;background:#dedede"></div>
<svg style="position:absolute;left:19.5px;top:58.5px" width="22.5" height="23" viewBox="-1 4 31 31"><path d="M13.80 12.20 L15.99 18.95 A7.1 7.1 0 1 1 20.79 13.43 Z" fill="#2ea44f"/><circle cx="13.80" cy="15.30" r="1.75" fill="#fff"/><path d="M22.10 20.70 L15.35 22.89 A7.1 7.1 0 1 1 20.87 27.69 Z" fill="#e33a32"/><circle cx="19.00" cy="20.70" r="1.75" fill="#fff"/><path d="M13.60 29.00 L11.41 22.25 A7.1 7.1 0 1 1 6.61 27.77 Z" fill="#ecb04f"/><circle cx="13.60" cy="25.90" r="1.75" fill="#fff"/><path d="M5.20 20.60 L11.95 18.41 A7.1 7.1 0 1 1 6.43 13.61 Z" fill="#48a3df"/><circle cx="8.30" cy="20.60" r="1.75" fill="#fff"/></svg>
<div style="position:absolute;left:44px;top:58.5px;font-size:21px;font-weight:normal;color:#252a31;letter-spacing:0.7px;-webkit-text-stroke:0.7px #252a31;white-space:nowrap">Pollination</div>
<svg style="position:absolute;left:0;top:0" width="691" height="691" viewBox="946 184 691 691">
<polygon points="1055.2,503.4 1105.1,481.3 1128.4,486.2 1151.6,477.0 1163.7,480.5 1199.8,495.1 1221.3,503.7 1221.3,530.4 1198.1,542.5 1161.9,560.5 1146.4,567.4 1093.9,550.2" fill="#2f2150" stroke="#0a0a0a" stroke-width="1.1" stroke-linejoin="round"/>
<polygon points="1164.5,475.3 1241.1,442.6 1291.1,452.9 1377.3,419.7 1609.0,469.0 1597.0,521.0 1554.8,529.8 1618.6,546.8 1570.4,585.1 1552.0,603.0 1510.6,644.3 1248.6,558.5 1221.3,530.4 1221.3,503.7" fill="#2e0b0c" stroke="#0a0a0a" stroke-width="0" stroke-linejoin="round"/>
<polygon points="1376.5,419.5 1310.4,484.3 1266.4,500.6 1260.1,508.5 1202.0,494.3" fill="#2e0b0c" stroke="#0a0a0a" stroke-width="0" stroke-linejoin="round"/>
<polygon points="1164.5,480.5 1212.7,491.7 1221.3,503.7 1199.8,495.1 1163.7,480.5" fill="#2e0b0c" stroke="#0a0a0a" stroke-width="0" stroke-linejoin="round"/>
<polyline points="1250.0,476.0 1301.0,488.2" fill="none" stroke="#050505" stroke-width="1.3" />
<polyline points="1250.0,477.6 1301.0,489.8" fill="none" stroke="#a8853a" stroke-width="1.1" stroke-dasharray="1 1.9"/>
<polyline points="1222.0,493.6 1262.0,502.6" fill="none" stroke="#a8853a" stroke-width="1.1" stroke-dasharray="1 1.9"/>
<polygon points="1100.0,551.5 1116.0,558.5 1116.3,572.6 1109.0,564.0" fill="#3b4f66" stroke="#0a0a0a" stroke-width="1.1" stroke-linejoin="round"/>
<polygon points="1116.0,558.0 1161.9,560.5 1163.7,589.8 1116.3,572.6" fill="#a98a3a" stroke="#0a0a0a" stroke-width="1.1" stroke-linejoin="round"/>
<polygon points="1161.9,560.5 1221.3,530.4 1222.2,561.4 1163.7,589.8" fill="#a98a3a" stroke="#0a0a0a" stroke-width="1.1" stroke-linejoin="round"/>
<polygon points="1168.0,565.5 1174.0,564.5 1174.0,576.5 1168.0,577.5" fill="#4d6f8c" stroke="#111" stroke-width="0.7" stroke-linejoin="round"/>
<polygon points="1179.5,557.5 1185.0,556.5 1185.0,571.0 1179.5,572.0" fill="#4d6f8c" stroke="#111" stroke-width="0.7" stroke-linejoin="round"/>
<polygon points="1186.0,556.0 1191.5,555.0 1191.5,569.0 1186.0,570.0" fill="#4d6f8c" stroke="#111" stroke-width="0.7" stroke-linejoin="round"/>
<polygon points="1202.4,546.0 1207.6,545.0 1207.6,559.5 1202.4,560.5" fill="#4d6f8c" stroke="#111" stroke-width="0.7" stroke-linejoin="round"/>
<polygon points="1075.8,499.4 1105.1,486.2 1130.9,491.7 1151.6,482.2 1163.7,485.1 1220.5,503.7 1220.5,529.5 1160.2,558.8 1115.4,545.0 1089.6,512.3" fill="#2e0b0c" stroke="#0a0a0a" stroke-width="1.1" stroke-linejoin="round"/>
<polyline points="1088.5,511.2 1133.1,493.4" fill="none" stroke="#050505" stroke-width="1.3" />
<polyline points="1088.5,512.8 1133.1,495.0" fill="none" stroke="#a8853a" stroke-width="1.1" stroke-dasharray="1 1.9"/>
<polyline points="1107.7,535.5 1188.8,498.5" fill="none" stroke="#050505" stroke-width="1.3" />
<polyline points="1107.7,537.1 1188.8,500.1" fill="none" stroke="#a8853a" stroke-width="1.1" stroke-dasharray="1 1.9"/>
<polyline points="1114.8,544.1 1201.9,502.5" fill="none" stroke="#050505" stroke-width="1.3" />
<polyline points="1114.8,545.7 1201.9,504.1" fill="none" stroke="#a8853a" stroke-width="1.1" stroke-dasharray="1 1.9"/>
<polyline points="1151.3,487.3 1170.5,493.4" fill="none" stroke="#050505" stroke-width="1.3" />
<polyline points="1151.3,488.9 1170.5,495.0" fill="none" stroke="#a8853a" stroke-width="1.1" stroke-dasharray="1 1.9"/>
<polyline points="1170.5,493.4 1186.8,499.0" fill="none" stroke="#050505" stroke-width="1.3" />
<polyline points="1170.5,495.0 1186.8,500.6" fill="none" stroke="#a8853a" stroke-width="1.1" stroke-dasharray="1 1.9"/>
<polyline points="1186.8,499.0 1220.2,506.1" fill="none" stroke="#050505" stroke-width="1.3" />
<polyline points="1186.8,500.6 1220.2,507.7" fill="none" stroke="#a8853a" stroke-width="1.1" stroke-dasharray="1 1.9"/>
<polyline points="1129.0,526.3 1141.2,531.4" fill="none" stroke="#050505" stroke-width="1.3" />
<polyline points="1129.0,527.9 1141.2,533.0" fill="none" stroke="#a8853a" stroke-width="1.1" stroke-dasharray="1 1.9"/>
<polyline points="1155.4,515.2 1166.5,519.3" fill="none" stroke="#050505" stroke-width="1.3" />
<polyline points="1155.4,516.8 1166.5,520.9" fill="none" stroke="#a8853a" stroke-width="1.1" stroke-dasharray="1 1.9"/>
<polyline points="1076.8,501.0 1106.1,487.8" fill="none" stroke="#a8853a" stroke-width="1.1" stroke-dasharray="1 1.9"/>
<polyline points="1105.1,487.9 1130.9,493.4" fill="none" stroke="#a8853a" stroke-width="1.1" stroke-dasharray="1 1.9"/>
<polyline points="1131.4,493.3 1152.1,483.8" fill="none" stroke="#a8853a" stroke-width="1.1" stroke-dasharray="1 1.9"/>
<polyline points="1115.4,543.3 1160.2,557.1" fill="none" stroke="#a8853a" stroke-width="1.1" stroke-dasharray="1 1.9"/>
<polyline points="1160.2,557.1 1220.5,527.8" fill="none" stroke="#a8853a" stroke-width="1.1" stroke-dasharray="1 1.9"/>
<polygon points="1198.1,541.5 1221.3,530.4 1266.0,542.5 1246.0,557.0 1232.0,552.0" fill="#2f2150" stroke="#0a0a0a" stroke-width="1.1" stroke-linejoin="round"/>
<polygon points="1222.0,551.0 1246.0,557.0 1240.0,562.0 1222.0,561.4" fill="#466580" stroke="#111" stroke-width="0.6" stroke-linejoin="round"/>
<polygon points="1164.5,475.3 1164.5,481.0 1222.0,495.5 1222.0,489.5" fill="#a98a3a" stroke="#0a0a0a" stroke-width="1.1" stroke-linejoin="round"/>
<polyline points="1186.5,480.8 1186.5,486.5" fill="none" stroke="#0a0a0a" stroke-width="0.9" />
<polyline points="1196.5,483.4 1196.5,489.1" fill="none" stroke="#0a0a0a" stroke-width="0.9" />
<polyline points="1208.5,486.4 1208.5,492.1" fill="none" stroke="#0a0a0a" stroke-width="0.9" />
<polygon points="1164.5,475.3 1241.1,442.6 1292.3,454.2 1220.2,489.3 1212.7,486.5" fill="#2e0b0c" stroke="#0a0a0a" stroke-width="1.1" stroke-linejoin="round"/>
<polyline points="1184.2,479.3 1261.7,446.9" fill="none" stroke="#050505" stroke-width="1.3" />
<polyline points="1184.2,480.9 1261.7,448.5" fill="none" stroke="#a8853a" stroke-width="1.1" stroke-dasharray="1 1.9"/>
<polyline points="1193.2,481.5 1270.7,449.1" fill="none" stroke="#050505" stroke-width="1.3" />
<polyline points="1193.2,483.1 1270.7,450.7" fill="none" stroke="#a8853a" stroke-width="1.1" stroke-dasharray="1 1.9"/>
<polyline points="1204.3,484.1 1281.8,451.7" fill="none" stroke="#050505" stroke-width="1.3" />
<polyline points="1204.3,485.7 1281.8,453.3" fill="none" stroke="#a8853a" stroke-width="1.1" stroke-dasharray="1 1.9"/>
<polyline points="1184.0,466.6 1234.2,478.5" fill="none" stroke="#050505" stroke-width="1.3" />
<polyline points="1184.0,468.2 1234.2,480.1" fill="none" stroke="#a8853a" stroke-width="1.1" stroke-dasharray="1 1.9"/>
<polyline points="1201.0,459.5 1251.2,471.4" fill="none" stroke="#050505" stroke-width="1.3" />
<polyline points="1201.0,461.1 1251.2,473.0" fill="none" stroke="#a8853a" stroke-width="1.1" stroke-dasharray="1 1.9"/>
<polyline points="1217.3,452.7 1267.5,464.6" fill="none" stroke="#050505" stroke-width="1.3" />
<polyline points="1217.3,454.3 1267.5,466.2" fill="none" stroke="#a8853a" stroke-width="1.1" stroke-dasharray="1 1.9"/>
<polyline points="1232.0,446.5 1282.2,458.4" fill="none" stroke="#050505" stroke-width="1.3" />
<polyline points="1232.0,448.1 1282.2,460.0" fill="none" stroke="#a8853a" stroke-width="1.1" stroke-dasharray="1 1.9"/>
<polyline points="1165.8,476.3 1243.3,443.9" fill="none" stroke="#a8853a" stroke-width="1.1" stroke-dasharray="1 1.9"/>
<polyline points="1242.1,443.9 1292.3,455.8" fill="none" stroke="#a8853a" stroke-width="1.1" stroke-dasharray="1 1.9"/>
<polygon points="1221.3,503.7 1267.0,510.6 1267.0,542.5 1221.3,530.4" fill="#a98a3a" stroke="#0a0a0a" stroke-width="1.1" stroke-linejoin="round"/>
<polygon points="1267.0,500.3 1279.0,498.5 1279.0,536.4 1267.0,542.5" fill="#7f6a2f" stroke="#0a0a0a" stroke-width="1.1" stroke-linejoin="round"/>
<polygon points="1279.0,498.5 1298.0,490.0 1298.0,526.0 1279.0,536.4" fill="#98803a" stroke="#0a0a0a" stroke-width="1.1" stroke-linejoin="round"/>
<polygon points="1298.0,490.0 1311.8,488.2 1311.8,519.2 1298.0,526.0" fill="#7f6a2f" stroke="#0a0a0a" stroke-width="1.1" stroke-linejoin="round"/>
<polygon points="1199.8,496.5 1220.5,489.0 1277.0,499.5 1253.0,511.5" fill="#2f2150" stroke="#0a0a0a" stroke-width="1.1" stroke-linejoin="round"/>
<polyline points="1377.3,417.8 1220.2,489.3" fill="none" stroke="#2f2150" stroke-width="2.6" />
<polyline points="1377.3,416.6 1220.2,488.1" fill="none" stroke="#0a0a0a" stroke-width="0.8" />
<polygon points="1311.3,491.0 1512.5,541.0 1512.5,565.0 1311.3,518.2" fill="#a98a3a" stroke="#0a0a0a" stroke-width="1.1" stroke-linejoin="round"/>
<polyline points="1458.0,528.7 1458.0,550.7" fill="none" stroke="#0a0a0a" stroke-width="0.9" />
<polyline points="1486.3,536.0 1486.3,558.0" fill="none" stroke="#0a0a0a" stroke-width="0.9" />
<polygon points="1510.8,538.3 1602.7,472.1 1597.3,521.3 1568.0,530.5 1554.8,529.8 1510.8,564.5" fill="#7f6a2f" stroke="#0a0a0a" stroke-width="1.1" stroke-linejoin="round"/>
<polygon points="1588.0,482.6 1602.7,472.1 1597.3,521.3 1584.0,524.0" fill="#a98a3a" stroke="#0a0a0a" stroke-width="1.1" stroke-linejoin="round"/>
<polygon points="1377.3,419.7 1609.0,469.0 1508.3,541.3 1305.0,484.7 1330.0,470.0" fill="#2e0b0c" stroke="#0a0a0a" stroke-width="0" stroke-linejoin="round"/>
<polygon points="1302.9,482.6 1512.5,534.5 1508.0,542.5 1310.2,491.0" fill="#2f2150" stroke="#0a0a0a" stroke-width="1.1" stroke-linejoin="round"/>
<polyline points="1609.0,469.0 1508.3,541.3" fill="none" stroke="#2f2150" stroke-width="2.2" />
<polyline points="1377.3,419.7 1609.0,469.0" fill="none" stroke="#0a0a0a" stroke-width="1.2" />
<polyline points="1377.3,421.9 1609.0,471.2" fill="none" stroke="#a8853a" stroke-width="1.1" stroke-dasharray="1 1.9"/>
<polyline points="1306.0,481.4 1512.0,532.4" fill="none" stroke="#a8853a" stroke-width="1.1" stroke-dasharray="1 1.9"/>
<polyline points="1372.0,428.0 1392.0,423.0" fill="none" stroke="#c9a540" stroke-width="0.9" />
<polygon points="1563.4,526.5 1583.2,516.6 1634.9,541.9 1618.4,554.0" fill="#2f2150" stroke="#0a0a0a" stroke-width="1.1" stroke-linejoin="round"/>
<polygon points="1571.4,585.5 1618.6,547.8 1614.0,582.4 1571.4,626.4" fill="#a98a3a" stroke="#0a0a0a" stroke-width="1.1" stroke-linejoin="round"/>
<polygon points="1575.0,597.0 1578.0,594.5 1578.0,603.0 1575.0,605.5" fill="#4d6f8c" stroke="#111" stroke-width="0.6" stroke-linejoin="round"/>
<polygon points="1583.0,590.0 1586.0,587.5 1586.0,596.0 1583.0,598.5" fill="#4d6f8c" stroke="#111" stroke-width="0.6" stroke-linejoin="round"/>
<polygon points="1591.0,583.0 1594.0,580.5 1594.0,589.0 1591.0,591.5" fill="#4d6f8c" stroke="#111" stroke-width="0.6" stroke-linejoin="round"/>
<polygon points="1599.0,576.0 1602.0,573.5 1602.0,582.0 1599.0,584.5" fill="#4d6f8c" stroke="#111" stroke-width="0.6" stroke-linejoin="round"/>
<polygon points="1607.0,569.0 1610.0,566.5 1610.0,575.0 1607.0,577.5" fill="#4d6f8c" stroke="#111" stroke-width="0.6" stroke-linejoin="round"/>
<polygon points="1554.8,529.8 1563.4,526.5 1618.4,554.0 1618.6,546.8" fill="#2e0b0c" stroke="#0a0a0a" stroke-width="0" stroke-linejoin="round"/>
<polygon points="1556.0,598.0 1570.4,585.1 1572.5,626.2 1560.0,612.0" fill="#a98a3a" stroke="#0a0a0a" stroke-width="1.1" stroke-linejoin="round"/>
<polygon points="1510.8,564.5 1554.8,529.8 1618.6,546.8 1611.5,553.9 1570.4,585.1" fill="#2e0b0c" stroke="#0a0a0a" stroke-width="1.1" stroke-linejoin="round"/>
<polyline points="1555.0,532.6 1617.0,549.6" fill="none" stroke="#a8853a" stroke-width="1.1" stroke-dasharray="1 1.9"/>
<polyline points="1546.0,537.0 1610.0,554.0" fill="none" stroke="#050505" stroke-width="1.3" />
<polyline points="1546.0,538.6 1610.0,555.6" fill="none" stroke="#a8853a" stroke-width="1.1" stroke-dasharray="1 1.9"/>
<polygon points="1227.7,568.3 1248.6,558.5 1510.6,644.3 1552.4,602.4 1581.0,610.2 1526.0,667.4" fill="#2f2150" stroke="#0a0a0a" stroke-width="1.1" stroke-linejoin="round"/>
<polygon points="1244.2,573.8 1526.0,667.4 1506.2,677.3 1244.2,588.1" fill="#a98a3a" stroke="#0a0a0a" stroke-width="1.1" stroke-linejoin="round"/>
<polyline points="1325.7,601.0 1325.7,615.0" fill="none" stroke="#0a0a0a" stroke-width="0.9" />
<polyline points="1370.8,616.0 1370.8,630.0" fill="none" stroke="#0a0a0a" stroke-width="0.9" />
<polyline points="1431.3,636.0 1431.3,650.0" fill="none" stroke="#0a0a0a" stroke-width="0.9" />
<polygon points="1387.3,622.3 1395.0,624.3 1395.0,630.0 1387.3,628.0" fill="#4d6f8c" stroke="#111" stroke-width="0.6" stroke-linejoin="round"/>
<polygon points="1403.8,627.8 1411.0,629.8 1411.0,637.0 1403.8,635.0" fill="#4d6f8c" stroke="#111" stroke-width="0.6" stroke-linejoin="round"/>
<polygon points="1412.0,630.0 1420.3,632.0 1420.3,640.0 1412.0,638.0" fill="#4d6f8c" stroke="#111" stroke-width="0.6" stroke-linejoin="round"/>
<polygon points="1438.0,638.8 1446.0,640.8 1446.0,648.0 1438.0,646.0" fill="#4d6f8c" stroke="#111" stroke-width="0.6" stroke-linejoin="round"/>
<polygon points="1447.0,641.0 1454.4,643.0 1454.4,651.0 1447.0,649.0" fill="#4d6f8c" stroke="#111" stroke-width="0.6" stroke-linejoin="round"/>
<polygon points="1464.4,647.6 1473.2,649.6 1473.2,655.3 1464.4,653.3" fill="#4d6f8c" stroke="#111" stroke-width="0.6" stroke-linejoin="round"/>
<polygon points="1483.0,654.2 1491.0,656.2 1491.0,663.0 1483.0,661.0" fill="#4d6f8c" stroke="#111" stroke-width="0.6" stroke-linejoin="round"/>
<polygon points="1492.0,657.0 1500.6,659.0 1500.6,666.0 1492.0,664.0" fill="#4d6f8c" stroke="#111" stroke-width="0.6" stroke-linejoin="round"/>
<polygon points="1248.6,558.5 1312.5,518.8 1440.0,554.0 1550.2,602.4 1510.6,644.3" fill="#2e0b0c" stroke="#0a0a0a" stroke-width="1.1" stroke-linejoin="round"/>
<polygon points="1435.6,556.7 1559.0,597.9 1559.0,603.0 1435.6,565.2" fill="#a98a3a" stroke="#0a0a0a" stroke-width="1.1" stroke-linejoin="round"/>
<polyline points="1461.0,565.5 1461.0,574.0" fill="none" stroke="#0a0a0a" stroke-width="0.9" />
<polyline points="1476.0,570.5 1476.0,579.0" fill="none" stroke="#0a0a0a" stroke-width="0.9" />
<polyline points="1489.0,574.8 1489.0,583.3" fill="none" stroke="#0a0a0a" stroke-width="0.9" />
<polyline points="1503.0,579.5 1503.0,588.0" fill="none" stroke="#0a0a0a" stroke-width="0.9" />
<polygon points="1435.6,556.7 1448.4,547.5 1570.4,584.4 1559.0,597.9" fill="#2e0b0c" stroke="#0a0a0a" stroke-width="1.1" stroke-linejoin="round"/>
<polyline points="1448.4,549.1 1570.4,586.0" fill="none" stroke="#a8853a" stroke-width="1.1" stroke-dasharray="1 1.9"/>
<polyline points="1325.7,584.8 1381.8,550.7" fill="none" stroke="#050505" stroke-width="1.3" />
<polyline points="1325.7,586.4 1381.8,552.3" fill="none" stroke="#a8853a" stroke-width="1.1" stroke-dasharray="1 1.9"/>
<polyline points="1381.8,550.7 1403.8,557.3" fill="none" stroke="#050505" stroke-width="1.3" />
<polyline points="1381.8,552.3 1403.8,558.9" fill="none" stroke="#a8853a" stroke-width="1.1" stroke-dasharray="1 1.9"/>
<polyline points="1343.3,573.8 1387.3,585.9" fill="none" stroke="#050505" stroke-width="1.3" />
<polyline points="1343.3,575.4 1387.3,587.5" fill="none" stroke="#a8853a" stroke-width="1.1" stroke-dasharray="1 1.9"/>
<polyline points="1364.2,579.3 1387.3,562.8" fill="none" stroke="#050505" stroke-width="1.3" />
<polyline points="1364.2,580.9 1387.3,564.4" fill="none" stroke="#a8853a" stroke-width="1.1" stroke-dasharray="1 1.9"/>
<polyline points="1369.7,580.4 1392.8,563.9" fill="none" stroke="#050505" stroke-width="1.3" />
<polyline points="1369.7,582.0 1392.8,565.5" fill="none" stroke="#a8853a" stroke-width="1.1" stroke-dasharray="1 1.9"/>
<polyline points="1371.9,598.0 1420.3,563.9" fill="none" stroke="#050505" stroke-width="1.3" />
<polyline points="1371.9,599.6 1420.3,565.5" fill="none" stroke="#a8853a" stroke-width="1.1" stroke-dasharray="1 1.9"/>
<polyline points="1433.5,617.9 1479.7,581.5" fill="none" stroke="#050505" stroke-width="1.3" />
<polyline points="1433.5,619.5 1479.7,583.1" fill="none" stroke="#a8853a" stroke-width="1.1" stroke-dasharray="1 1.9"/>
<polyline points="1296.0,528.7 1363.1,546.3" fill="none" stroke="#050505" stroke-width="1.3" />
<polyline points="1296.0,530.3 1363.1,547.9" fill="none" stroke="#a8853a" stroke-width="1.1" stroke-dasharray="1 1.9"/>
<polyline points="1363.1,546.3 1435.0,562.0" fill="none" stroke="#050505" stroke-width="1.3" />
<polyline points="1363.1,547.9 1435.0,563.6" fill="none" stroke="#a8853a" stroke-width="1.1" stroke-dasharray="1 1.9"/>
<polyline points="1248.6,556.8 1510.6,642.6" fill="none" stroke="#a8853a" stroke-width="1.1" stroke-dasharray="1 1.9"/>
<polyline points="1312.5,520.4 1435.6,558.3" fill="none" stroke="#a8853a" stroke-width="1.1" stroke-dasharray="1 1.9"/>
</svg>
<svg style="position:absolute;left:26px;top:530px" width="66" height="34" viewBox="0 0 66 34"><ellipse cx="30.1" cy="18" rx="19" ry="9.5" fill="none" stroke="#bbb" stroke-width="4" opacity="0.6"/><ellipse cx="30.1" cy="18" rx="17.5" ry="8.3" fill="none" stroke="#6b6b6b" stroke-width="2.6"/><path d="M3.5 10 L8 11.3 M46.5 7.3 L50 9 M7 30 L11 27.5 M58 24.5 L62.5 26" stroke="#555" stroke-width="2.6" stroke-linecap="round"/></svg>
<div style="position:absolute;left:229px;top:605px;width:22px;height:22px;background:#4479f7;border-radius:4px"></div>
<svg style="position:absolute;left:229px;top:605px" width="22" height="22" viewBox="0 0 22 22"><path d="M4.5 5.5 L17.5 3.5 V18.5 L4.5 16.5 Z M2.5 11 H19.5" fill="none" stroke="#fff" stroke-width="1.4"/></svg>
<div class="vb" style="left:256.5px"><svg width="22" height="22" viewBox="0 0 22 22"><rect x="4" y="4" width="14" height="14" fill="none" stroke="#111" stroke-width="1.6"/></svg></div>
<div style="position:absolute;left:285.5px;top:611px;width:1.3px;height:12px;background:#222"></div>
<div class="vb" style="left:292.5px"><svg width="22" height="22" viewBox="0 0 22 22"><circle cx="9" cy="9" r="5.3" fill="none" stroke="#111" stroke-width="1.4"/><path d="M12.8 12.8 L17.5 17.5" stroke="#111" stroke-width="1.5"/><path d="M7.8 7.3 L6.3 9 L7.8 10.7 M10.2 7.3 L11.7 9 L10.2 10.7" fill="none" stroke="#111" stroke-width="1"/></svg></div>
<div style="position:absolute;left:320.5px;top:611px;width:1.3px;height:12px;background:#222"></div>
<div class="vb" style="left:327.5px"><svg width="22" height="22" viewBox="0 0 22 22"><rect x="3.5" y="3.5" width="15" height="15" rx="1.5" fill="#7f7f7f" stroke="#222" stroke-width="1.2"/></svg></div>
<div class="vb" style="left:355.5px"><svg width="22" height="22" viewBox="0 0 22 22"><path d="M3.5 3 V19 M18 11 H5.5 M10.5 6 L5.5 11 L10.5 16" fill="none" stroke="#111" stroke-width="1.3"/></svg></div>
<div class="vb" style="left:383.5px"><svg width="22" height="22" viewBox="0 0 22 22"><path d="M18.5 3 V19 M4 11 H16.5 M11.5 6 L16.5 11 L11.5 16" fill="none" stroke="#111" stroke-width="1.3"/></svg></div>
<div class="vb" style="left:411.5px"><svg width="22" height="22" viewBox="0 0 22 22"><path d="M3 3.5 H19 M11 19 V6 M6 11 L11 6 L16 11" fill="none" stroke="#111" stroke-width="1.3"/></svg></div>
<div class="vb" style="left:439.5px"><svg width="22" height="22" viewBox="0 0 22 22"><path d="M3 18.5 H19 M11 3 V16 M6 11 L11 16 L16 11" fill="none" stroke="#111" stroke-width="1.3"/></svg></div>

<div style="position:absolute;left:675px;top:613px;width:15px;height:17px;background:#d4d4d4;border-radius:3px"></div>
<div style="position:absolute;left:0;top:630px;width:691px;height:61px;border:1px solid #dcdcdc;border-radius:4px;background:#fff"></div>
<div class="tag" style="left:6.1px;top:636.3px;width:63.8px"><span>Wall</span><svg width="12" height="12" viewBox="0 0 12 12"><circle cx="6" cy="6" r="4.8" fill="none" stroke="#fff" stroke-width="1.4"/><path d="M4.3 4.3 L7.7 7.7 M7.7 4.3 L4.3 7.7" stroke="#fff" stroke-width="1.3"/></svg></div>
<div class="tag" style="left:75.3px;top:636.3px;width:65.4px"><span>Roof</span><svg width="12" height="12" viewBox="0 0 12 12"><circle cx="6" cy="6" r="4.8" fill="none" stroke="#fff" stroke-width="1.4"/><path d="M4.3 4.3 L7.7 7.7 M7.7 4.3 L4.3 7.7" stroke="#fff" stroke-width="1.3"/></svg></div>
<div class="tag" style="left:146.2px;top:636.3px;width:67.5px"><span>Floor</span><svg width="12" height="12" viewBox="0 0 12 12"><circle cx="6" cy="6" r="4.8" fill="none" stroke="#fff" stroke-width="1.4"/><path d="M4.3 4.3 L7.7 7.7 M7.7 4.3 L4.3 7.7" stroke="#fff" stroke-width="1.3"/></svg></div>
<div class="tag" style="left:219.2px;top:636.3px;width:90.3px"><span>Aperture</span><svg width="12" height="12" viewBox="0 0 12 12"><circle cx="6" cy="6" r="4.8" fill="none" stroke="#fff" stroke-width="1.4"/><path d="M4.3 4.3 L7.7 7.7 M7.7 4.3 L4.3 7.7" stroke="#fff" stroke-width="1.3"/></svg></div>
<div class="tag" style="left:315.0px;top:636.3px;width:66.0px"><span>Door</span><svg width="12" height="12" viewBox="0 0 12 12"><circle cx="6" cy="6" r="4.8" fill="none" stroke="#fff" stroke-width="1.4"/><path d="M4.3 4.3 L7.7 7.7 M7.7 4.3 L4.3 7.7" stroke="#fff" stroke-width="1.3"/></svg></div>
<div class="tag" style="left:387.2px;top:636.3px;width:130.3px"><span>Outdoor Shade</span><svg width="12" height="12" viewBox="0 0 12 12"><circle cx="6" cy="6" r="4.8" fill="none" stroke="#fff" stroke-width="1.4"/><path d="M4.3 4.3 L7.7 7.7 M7.7 4.3 L4.3 7.7" stroke="#fff" stroke-width="1.3"/></svg></div>
<div class="tag" style="left:6.1px;top:662.2px;width:157.7px"><span>Room Display Name</span><svg width="12" height="12" viewBox="0 0 12 12"><circle cx="6" cy="6" r="4.8" fill="none" stroke="#fff" stroke-width="1.4"/><path d="M4.3 4.3 L7.7 7.7 M7.7 4.3 L4.3 7.7" stroke="#fff" stroke-width="1.3"/></svg></div>
<div class="tag" style="left:169.0px;top:662.2px;width:101.0px"><span>Wireframe</span><svg width="12" height="12" viewBox="0 0 12 12"><circle cx="6" cy="6" r="4.8" fill="none" stroke="#fff" stroke-width="1.4"/><path d="M4.3 4.3 L7.7 7.7 M7.7 4.3 L4.3 7.7" stroke="#fff" stroke-width="1.3"/></svg></div>
<div style="position:absolute;left:278px;top:662px;font-size:13px;color:#777">Select</div>

</div>
<div id="vgroup" class="abs"><div style="position:absolute;left:0;top:0;width:40px;height:39.5px;background:#3b65d6"></div>
<div style="position:absolute;left:0;top:78px;width:40px;height:1px;background:#3a3a3a"></div>
<svg style="position:absolute;left:12px;top:12px" width="16" height="17" viewBox="0 0 16 17"><path d="M8 0.8 L15 4.6 V12.4 L8 16.2 L1 12.4 V4.6 Z" fill="#fff"/><path d="M8 2.2 L13.6 5.3 V11.7 L8 14.8 L2.4 11.7 V5.3 Z" fill="#f0a63a"/><path d="M2.4 5.3 L8 8.4 L13.6 5.3 M8 8.4 V14.8" fill="none" stroke="#fff" stroke-width="0.7"/><path d="M10 9.5 L12.3 8.3 V11.2 L10 12.4 Z" fill="#3aa0e8"/></svg>
<svg style="position:absolute;left:12px;top:51px" width="16" height="17" viewBox="0 0 16 17"><path d="M8 0.8 L15 4.6 V12.4 L8 16.2 L1 12.4 V4.6 Z" fill="#fff"/><path d="M8 1.8 L13.5 4.8 L8 7.8 L2.5 4.8 Z" fill="#a52a2a"/></svg>
<svg style="position:absolute;left:11px;top:90px" width="18" height="16" viewBox="0 0 18 16"><path d="M2 1.5 H11 L17 8 H9 V14.5 H2 Z" fill="#fff"/><path d="M4.2 2.3 H11.2 L14.8 6.6 H7.8 Z" fill="#a24bb0"/></svg>
</div>
<div id="export" class="abs">Export</div>
<svg class="abs" style="left:1674px;top:6px" width="16" height="26" viewBox="0 0 16 26"><rect x="3" y="2.5" width="8" height="15" rx="2" fill="#3c9ad6"/><path d="M3 7 H11 M3 11 H11 M3 14.5 H11" stroke="#2a6e9e" stroke-width="0.8"/><circle cx="7" cy="2.5" r="1.6" fill="#c23d3d"/><rect x="5.5" y="17.5" width="3" height="4" fill="#2c6fa8"/><path d="M4 21.5 H10 V24.5 H4 Z M10 20 L14 20.5 L13.5 24 L10 24" fill="#3c9ad6"/></svg>

<svg class="abs" style="left:1483px;top:918px" width="36" height="37" viewBox="-1 4 31 31" opacity="0.6"><path d="M13.80 12.20 L15.99 18.95 A7.1 7.1 0 1 1 20.79 13.43 Z" fill="#2ea44f"/><circle cx="13.80" cy="15.30" r="1.75" fill="#f8f9fb"/><path d="M22.10 20.70 L15.35 22.89 A7.1 7.1 0 1 1 20.87 27.69 Z" fill="#e33a32"/><circle cx="19.00" cy="20.70" r="1.75" fill="#f8f9fb"/><path d="M13.60 29.00 L11.41 22.25 A7.1 7.1 0 1 1 6.61 27.77 Z" fill="#ecb04f"/><circle cx="13.60" cy="25.90" r="1.75" fill="#f8f9fb"/><path d="M5.20 20.60 L11.95 18.41 A7.1 7.1 0 1 1 6.43 13.61 Z" fill="#48a3df"/><circle cx="8.30" cy="20.60" r="1.75" fill="#f8f9fb"/></svg>
<div id="plogo" class="abs" style="left:1521.5px;top:918.5px;font-size:34px;line-height:34px;font-weight:normal;color:#676767;letter-spacing:1.3px;-webkit-text-stroke:1.2px #676767;white-space:nowrap">Pollination</div>

<div id="rstrip" class="abs"></div>
<div id="rpanel" class="abs"><div style="position:absolute;left:102.3px;top:5.3px;width:27.4px;height:27.5px;border:1px solid #d9d9d9;border-radius:6px;background:#fff"></div>
<svg style="position:absolute;left:109px;top:12px" width="14" height="13" viewBox="0 0 14 13"><rect x="1" y="1.5" width="12" height="10" fill="none" stroke="#222" stroke-width="1.3"/><path d="M1 5 H13 M1 8.3 H13 M4.5 5 V11.5" stroke="#222" stroke-width="1.1"/></svg>
<div style="position:absolute;left:134.2px;top:5.3px;width:27.4px;height:27.5px;border:1px solid #d9d9d9;border-radius:6px;background:#fff"></div>
<svg style="position:absolute;left:141px;top:12px" width="14" height="14" viewBox="0 0 14 14"><path d="M12.5 1.5 L8.3 5.7 M8.2 2.6 V5.8 H11.4 M1.5 12.5 L5.7 8.3 M2.6 8.2 H5.8 V11.4" fill="none" stroke="#222" stroke-width="1.3"/></svg>
<div style="position:absolute;left:166.0px;top:5.3px;width:27.8px;height:27.5px;background:#4479f7;border-radius:6px"></div>
<svg style="position:absolute;left:175px;top:11px" width="16" height="16" viewBox="0 0 16 16"><path d="M2.5 2.5 L13.5 13.5 M13.5 2.5 L2.5 13.5" stroke="#fff" stroke-width="1.3"/></svg>
<div style="position:absolute;left:8.9px;top:41.0px;width:184.9px;height:1.0px;background:#e9e9e9"></div>
<div style="position:absolute;left:13.6px;top:69.9px;font-size:14px;line-height:14px;font-weight:bold;color:#111;white-space:nowrap;">General</div>
<div style="position:absolute;left:80.0px;top:77.2px;width:110.0px;height:1.0px;background:#efefef"></div>
<div style="position:absolute;left:13.5px;top:101.0px;font-size:13px;line-height:13px;font-weight:normal;color:#1b1b1b;white-space:nowrap;-webkit-text-stroke:0.25px #1b1b1b;">Identifier</div>
<div style="position:absolute;left:73.0px;top:101.0px;font-size:13px;line-height:13px;font-weight:normal;color:#1b1b1b;white-space:nowrap;-webkit-text-stroke:0.25px #1b1b1b;letter-spacing:-0.1px">Room_dbe58de1-...</div>
<div style="position:absolute;left:13.5px;top:127.2px;font-size:13px;line-height:13px;font-weight:normal;color:#1b1b1b;white-space:nowrap;-webkit-text-stroke:0.25px #1b1b1b;">Name</div>
<div style="position:absolute;left:73.5px;top:123.3px;width:115.9px;height:27.4px;border:1px solid #d5d5d5;border-radius:6px;background:#fff"></div>
<div style="position:absolute;left:81.1px;top:129.6px;font-size:13px;line-height:13px;font-weight:normal;color:#1b1b1b;white-space:nowrap;-webkit-text-stroke:0.25px #1b1b1b;">100-VEST.</div>
<div style="position:absolute;left:13.5px;top:158.7px;font-size:13px;line-height:13px;font-weight:normal;color:#1b1b1b;white-space:nowrap;-webkit-text-stroke:0.25px #1b1b1b;">Story</div>
<div style="position:absolute;left:73.5px;top:155.5px;width:115.9px;height:27.0px;border:1px solid #d5d5d5;border-radius:6px;background:#fff"></div>
<div style="position:absolute;left:81.1px;top:162.7px;font-size:13px;line-height:13px;font-weight:normal;color:#1b1b1b;white-space:nowrap;-webkit-text-stroke:0.25px #1b1b1b;letter-spacing:-0.6px">1ST FF EL (TE...</div>
<svg style="position:absolute;left:173px;top:165px" width="10" height="7" viewBox="0 0 10 7"><path d="M1 1 L5 5.5 L9 1" fill="none" stroke="#bbb" stroke-width="1"/></svg>
<div style="position:absolute;left:13.5px;top:190.8px;font-size:13px;line-height:13px;font-weight:normal;color:#1b1b1b;white-space:nowrap;-webkit-text-stroke:0.25px #1b1b1b;">Zone</div>
<div style="position:absolute;left:73.5px;top:187.6px;width:115.9px;height:26.9px;border:1px solid #d5d5d5;border-radius:6px;background:#fff"></div>
<div style="position:absolute;left:81.1px;top:194.5px;font-size:13px;line-height:13px;font-weight:normal;color:#b9b9b9;white-space:nowrap;-webkit-text-stroke:0.25px #b9b9b9;">Zone name</div>
<div style="position:absolute;left:13.6px;top:235.0px;font-size:14px;line-height:14px;font-weight:bold;color:#111;white-space:nowrap;">Geometry</div>
<div style="position:absolute;left:93.0px;top:242.3px;width:97.0px;height:1.0px;background:#efefef"></div>
<div style="position:absolute;left:13.5px;top:266.0px;font-size:13px;line-height:13px;font-weight:normal;color:#1b1b1b;white-space:nowrap;-webkit-text-stroke:0.25px #1b1b1b;">Aperture</div>
<div style="position:absolute;left:13.5px;top:288.0px;font-size:13px;line-height:13px;font-weight:normal;color:#1b1b1b;white-space:nowrap;-webkit-text-stroke:0.25px #1b1b1b;">s</div>
<svg style="position:absolute;left:75px;top:264px" width="13" height="13" viewBox="0 0 13 13"><rect x="1" y="1" width="11" height="11" fill="none" stroke="#222" stroke-width="1.1"/><path d="M6.5 1 V12" stroke="#222" stroke-width="1.1"/></svg>
<div style="position:absolute;left:95.2px;top:267.7px;font-size:13px;line-height:13px;font-weight:normal;color:#1b1b1b;white-space:nowrap;-webkit-text-stroke:0.25px #1b1b1b;">20</div>
<svg style="position:absolute;left:131px;top:263px" width="15" height="15" viewBox="0 0 15 15"><path d="M1 13.5 H14 M3.5 13.5 V1.5 H11.5 V13.5" fill="none" stroke="#222" stroke-width="1.1"/><circle cx="9.3" cy="8" r="0.9" fill="#222"/></svg>
<div style="position:absolute;left:151.5px;top:267.7px;font-size:13px;line-height:13px;font-weight:normal;color:#1b1b1b;white-space:nowrap;-webkit-text-stroke:0.25px #1b1b1b;">0</div>
<div style="position:absolute;left:13.5px;top:313.9px;font-size:13px;line-height:13px;font-weight:normal;color:#1b1b1b;white-space:nowrap;-webkit-text-stroke:0.25px #1b1b1b;">Area</div>
<div style="position:absolute;left:73.3px;top:313.9px;font-size:13px;line-height:13px;font-weight:normal;color:#1b1b1b;white-space:nowrap;-webkit-text-stroke:0.25px #1b1b1b;letter-spacing:-0.2px">191.391 sqft</div>
<div style="position:absolute;left:73.3px;top:335.4px;width:116.1px;height:27.4px;border:1px solid #d5d5d5;border-radius:6px;background:#fff"></div>
<div style="position:absolute;left:81.0px;top:341.9px;font-size:13px;line-height:13px;font-weight:normal;color:#1b1b1b;white-space:nowrap;-webkit-text-stroke:0.25px #1b1b1b;">30</div>
<div style="position:absolute;left:171.5px;top:341.9px;font-size:13px;line-height:13px;font-weight:normal;color:#1b1b1b;white-space:nowrap;-webkit-text-stroke:0.25px #1b1b1b;">ft</div>
<div style="position:absolute;left:13.5px;top:338.6px;font-size:13px;line-height:13px;font-weight:normal;color:#1b1b1b;white-space:nowrap;-webkit-text-stroke:0.25px #1b1b1b;">Room</div>
<div style="position:absolute;left:13.5px;top:360.3px;font-size:13px;line-height:13px;font-weight:normal;color:#1b1b1b;white-space:nowrap;-webkit-text-stroke:0.25px #1b1b1b;">height</div>
<div style="position:absolute;left:73.3px;top:383.4px;width:116.1px;height:27.0px;border:1px solid #d5d5d5;border-radius:6px;background:#fff"></div>
<div style="position:absolute;left:81.0px;top:389.9px;font-size:13px;line-height:13px;font-weight:normal;color:#1b1b1b;white-space:nowrap;-webkit-text-stroke:0.25px #1b1b1b;">0</div>
<div style="position:absolute;left:171.5px;top:389.9px;font-size:13px;line-height:13px;font-weight:normal;color:#1b1b1b;white-space:nowrap;-webkit-text-stroke:0.25px #1b1b1b;">ft</div>
<div style="position:absolute;left:13.5px;top:386.6px;font-size:13px;line-height:13px;font-weight:normal;color:#1b1b1b;white-space:nowrap;-webkit-text-stroke:0.25px #1b1b1b;">Room</div>
<div style="position:absolute;left:13.5px;top:407.5px;font-size:13px;line-height:13px;font-weight:normal;color:#1b1b1b;white-space:nowrap;-webkit-text-stroke:0.25px #1b1b1b;">elevation</div>
<div style="position:absolute;left:13.6px;top:446.0px;font-size:14px;line-height:14px;font-weight:bold;color:#111;white-space:nowrap;">Boundary Condition</div>
<div style="position:absolute;left:161.0px;top:453.3px;width:29.0px;height:1.0px;background:#efefef"></div>
<div style="position:absolute;left:73.1px;top:473.0px;width:27.7px;height:27.9px;background:#4479f7;border-radius:5px"></div>
<svg style="position:absolute;left:73.1px;top:473.0px" width="28" height="28" viewBox="0 0 28 28"><path d="M8.5 14.5 L12.3 18 L19.5 10" fill="none" stroke="#fff" stroke-width="1.2"/></svg>
<div style="position:absolute;left:13.5px;top:477.0px;font-size:13px;line-height:13px;font-weight:normal;color:#1b1b1b;white-space:nowrap;-webkit-text-stroke:0.25px #1b1b1b;">Ground</div>
<div style="position:absolute;left:13.5px;top:498.6px;font-size:13px;line-height:13px;font-weight:normal;color:#1b1b1b;white-space:nowrap;-webkit-text-stroke:0.25px #1b1b1b;">contact</div>
<div style="position:absolute;left:73.1px;top:521.0px;width:27.7px;height:27.8px;background:#4479f7;border-radius:5px"></div>
<svg style="position:absolute;left:73.1px;top:521.0px" width="28" height="28" viewBox="0 0 28 28"><path d="M8.5 14.5 L12.3 18 L19.5 10" fill="none" stroke="#fff" stroke-width="1.2"/></svg>
<div style="position:absolute;left:13.5px;top:524.9px;font-size:13px;line-height:13px;font-weight:normal;color:#1b1b1b;white-space:nowrap;-webkit-text-stroke:0.25px #1b1b1b;">Top</div>
<div style="position:absolute;left:13.5px;top:545.6px;font-size:13px;line-height:13px;font-weight:normal;color:#1b1b1b;white-space:nowrap;-webkit-text-stroke:0.25px #1b1b1b;">exposed</div>
<div style="position:absolute;left:73.1px;top:568.2px;width:27.7px;height:27.9px;background:#4479f7;border-radius:5px"></div>
<svg style="position:absolute;left:73.1px;top:568.2px" width="28" height="28" viewBox="0 0 28 28"><path d="M8.5 14.5 L12.3 18 L19.5 10" fill="none" stroke="#fff" stroke-width="1.2"/></svg>
<div style="position:absolute;left:13.5px;top:571.7px;font-size:13px;line-height:13px;font-weight:normal;color:#1b1b1b;white-space:nowrap;-webkit-text-stroke:0.25px #1b1b1b;">Has floor</div>
<div style="position:absolute;left:73.1px;top:600.1px;width:27.7px;height:27.7px;background:#4479f7;border-radius:5px"></div>
<svg style="position:absolute;left:73.1px;top:600.1px" width="28" height="28" viewBox="0 0 28 28"><path d="M8.5 14.5 L12.3 18 L19.5 10" fill="none" stroke="#fff" stroke-width="1.2"/></svg>
<div style="position:absolute;left:13.5px;top:604.0px;font-size:13px;line-height:13px;font-weight:normal;color:#1b1b1b;white-space:nowrap;-webkit-text-stroke:0.25px #1b1b1b;">Has</div>
<div style="position:absolute;left:13.5px;top:625.2px;font-size:13px;line-height:13px;font-weight:normal;color:#1b1b1b;white-space:nowrap;-webkit-text-stroke:0.25px #1b1b1b;">ceiling</div>
<div style="position:absolute;left:13.6px;top:662.7px;font-size:14px;line-height:14px;font-weight:bold;color:#111;white-space:nowrap;">Plenums</div>
<div style="position:absolute;left:83.2px;top:670.0px;width:106.8px;height:1.0px;background:#efefef"></div>
<div style="position:absolute;left:73.3px;top:691.4px;width:116.1px;height:27.0px;border:1px solid #d5d5d5;border-radius:6px;background:#fff"></div>
<div style="position:absolute;left:81.0px;top:697.9px;font-size:13px;line-height:13px;font-weight:normal;color:#1b1b1b;white-space:nowrap;-webkit-text-stroke:0.25px #1b1b1b;">0</div>
<div style="position:absolute;left:171.5px;top:697.9px;font-size:13px;line-height:13px;font-weight:normal;color:#1b1b1b;white-space:nowrap;-webkit-text-stroke:0.25px #1b1b1b;">ft</div>
<div style="position:absolute;left:13.5px;top:694.8px;font-size:13px;line-height:13px;font-weight:normal;color:#1b1b1b;white-space:nowrap;-webkit-text-stroke:0.25px #1b1b1b;">Floor</div>
<div style="position:absolute;left:13.5px;top:715.6px;font-size:13px;line-height:13px;font-weight:normal;color:#1b1b1b;white-space:nowrap;-webkit-text-stroke:0.25px #1b1b1b;">plenum</div>
<div style="position:absolute;left:13.5px;top:737.2px;font-size:13px;line-height:13px;font-weight:normal;color:#1b1b1b;white-space:nowrap;-webkit-text-stroke:0.25px #1b1b1b;">depth</div>
<div style="position:absolute;left:73.3px;top:760.3px;width:116.1px;height:27.0px;border:1px solid #d5d5d5;border-radius:6px;background:#fff"></div>
<div style="position:absolute;left:81.0px;top:766.8px;font-size:13px;line-height:13px;font-weight:normal;color:#1b1b1b;white-space:nowrap;-webkit-text-stroke:0.25px #1b1b1b;">0</div>
<div style="position:absolute;left:171.5px;top:766.8px;font-size:13px;line-height:13px;font-weight:normal;color:#1b1b1b;white-space:nowrap;-webkit-text-stroke:0.25px #1b1b1b;">ft</div>
<div style="position:absolute;left:13.5px;top:763.8px;font-size:13px;line-height:13px;font-weight:normal;color:#1b1b1b;white-space:nowrap;-webkit-text-stroke:0.25px #1b1b1b;">Ceiling</div>
<div style="position:absolute;left:13.5px;top:784.4px;font-size:13px;line-height:13px;font-weight:normal;color:#1b1b1b;white-space:nowrap;-webkit-text-stroke:0.25px #1b1b1b;">plenum</div>
<div style="position:absolute;left:13.5px;top:806.1px;font-size:13px;line-height:13px;font-weight:normal;color:#1b1b1b;white-space:nowrap;-webkit-text-stroke:0.25px #1b1b1b;">depth</div>
<div style="position:absolute;left:9.0px;top:921.0px;width:185.0px;height:1.0px;background:#e9e9e9"></div>
<div style="position:absolute;left:9.3px;top:926.2px;width:27.0px;height:27.2px;border:1px solid #dedede;border-radius:6px;background:#fff"></div>
<svg style="position:absolute;left:10.8px;top:927.7px" width="24" height="24" viewBox="0 0 24 24"><rect x="5.5" y="9.5" width="13" height="10" fill="none" stroke="#222" stroke-width="1.4"/><path d="M12 4 V15 M8.5 11.5 L12 15 L15.5 11.5" fill="none" stroke="#222" stroke-width="1.4"/><path d="M7 14.5 H17" stroke="#999" stroke-width="0.6" stroke-dasharray="1 1"/></svg>
<div style="position:absolute;left:41.2px;top:926.2px;width:27.0px;height:27.2px;border:1px solid #dedede;border-radius:6px;background:#fff"></div>
<svg style="position:absolute;left:42.7px;top:927.7px" width="24" height="24" viewBox="0 0 24 24"><rect x="5.5" y="4.5" width="13" height="10" fill="none" stroke="#222" stroke-width="1.4"/><path d="M12 7 V19 M8.5 15.5 L12 19 L15.5 15.5" fill="none" stroke="#222" stroke-width="1.4"/><path d="M7 8.5 H17" stroke="#999" stroke-width="0.6" stroke-dasharray="1 1"/></svg>
<div style="position:absolute;left:73.4px;top:926.2px;width:27.0px;height:27.2px;border:1px solid #dedede;border-radius:6px;background:#fff"></div>
<svg style="position:absolute;left:74.9px;top:927.7px" width="24" height="24" viewBox="0 0 24 24"><path d="M5.5 5.5 H18.5" stroke="#222" stroke-width="1.4"/><path d="M12 19 V9.5" stroke="#222" stroke-width="1.8"/><path d="M9.3 11.5 L12 8 L14.7 11.5 Z" fill="#222"/></svg>
<div style="position:absolute;left:105.2px;top:926.2px;width:27.0px;height:27.2px;border:1px solid #dedede;border-radius:6px;background:#fff"></div>
<svg style="position:absolute;left:106.7px;top:927.7px" width="24" height="24" viewBox="0 0 24 24"><rect x="3.5" y="5.5" width="17" height="13" rx="2" fill="none" stroke="#222" stroke-width="1.5"/><text x="12" y="15.6" font-family="Liberation Sans" font-size="8" font-weight="bold" text-anchor="middle" fill="#222">3D</text></svg>
<div style="position:absolute;left:137.1px;top:926.2px;width:27.0px;height:27.2px;border:1px solid #dedede;border-radius:6px;background:#fff"></div>
<svg style="position:absolute;left:138.6px;top:927.7px" width="24" height="24" viewBox="0 0 24 24"><circle cx="12" cy="12" r="7.5" fill="none" stroke="#222" stroke-width="1.5"/><path d="M12 4.5 V19.5 M4.5 12 H19.5 M6.7 6.7 L17.3 17.3 M17.3 6.7 L6.7 17.3" stroke="#444" stroke-width="1"/></svg>
<div style="position:absolute;left:169.2px;top:926.2px;width:27.0px;height:27.2px;border:1px solid #dedede;border-radius:6px;background:#fff"></div>
<svg style="position:absolute;left:170.7px;top:927.7px" width="24" height="24" viewBox="0 0 24 24"><path d="M6 10 V5.5 H15.5 L18 8 V10 M15.5 5.5 V8 H18" fill="none" stroke="#222" stroke-width="1.3"/><text x="12" y="18.5" font-family="Liberation Sans" font-size="6.5" font-weight="bold" text-anchor="middle" fill="#222">PDF</text></svg>
</div>
<div id="status" class="abs"><svg style="position:absolute;left:37px;top:10px" width="16" height="14" viewBox="0 0 16 14"><path d="M1 3 H3 M1 7 H3 M1 11 H3 M5.5 3 H15 M5.5 7 H15 M5.5 11 H15" stroke="#222" stroke-width="1.4"/></svg>
<div style="position:absolute;left:62.4px;top:12px;font-size:14px;line-height:14px;color:#1b1b1b;font-weight:normal;white-space:nowrap;-webkit-text-stroke:0.25px #1b1b1b">Logs</div>
<div style="position:absolute;left:107px;top:5px;width:1px;height:19px;background:#d6d6d6"></div>
<svg style="position:absolute;left:124px;top:10px" width="16" height="14" viewBox="0 0 16 14"><circle cx="2" cy="3" r="1.3" fill="#aaa"/><circle cx="2" cy="8.5" r="1.3" fill="#aaa"/><circle cx="7.5" cy="3" r="1.3" fill="#aaa"/><circle cx="7.5" cy="8.5" r="1.3" fill="#aaa"/><circle cx="13" cy="3" r="1.3" fill="#aaa"/><circle cx="13" cy="8.5" r="1.3" fill="#aaa"/></svg>
<div style="position:absolute;left:149.9px;top:12px;font-size:14px;line-height:14px;color:#a9a9a9;font-weight:normal;white-space:nowrap;-webkit-text-stroke:0.25px #a9a9a9">Grid</div>
<div style="position:absolute;left:192px;top:5px;width:1px;height:19px;background:#d6d6d6"></div>
<svg style="position:absolute;left:208px;top:8px" width="20" height="18" viewBox="0 0 20 18"><path d="M3.5 10.5 L9.5 4.5 Q12.5 1.5 15.5 4.5 Q18.5 7.5 15.5 10.5 L10 16 M7 13.5 L12 8.5 Q13 7.5 12.2 6.7 Q11.4 6 10.5 6.9 L5.5 12" fill="none" stroke="#4479f7" stroke-width="1.4" stroke-linejoin="round"/></svg>
<div style="position:absolute;left:234.5px;top:12px;font-size:14px;line-height:14px;color:#4479f7;font-weight:normal;white-space:nowrap;-webkit-text-stroke:0.25px #4479f7">Snap</div>
<div style="position:absolute;left:283px;top:5px;width:1px;height:19px;background:#d6d6d6"></div>
<svg style="position:absolute;left:300px;top:10px" width="16" height="14" viewBox="0 0 16 14"><path d="M3 12 L8 4 L12 7 L7 14" fill="none" stroke="#222" stroke-width="1.4"/></svg>
<div style="position:absolute;left:321px;top:12px;font-size:14px;line-height:14px;color:#1b1b1b;font-weight:normal;white-space:nowrap;-webkit-text-stroke:0.25px #1b1b1b">Highlight</div>
<div style="position:absolute;left:393px;top:5px;width:1px;height:19px;background:#d6d6d6"></div>
<svg style="position:absolute;left:408px;top:8px" width="19" height="19" viewBox="0 0 19 19"><circle cx="9.5" cy="9.5" r="6.1" fill="none" stroke="#222" stroke-width="2.2" stroke-dasharray="1.8 3.0"/><circle cx="9.5" cy="9.5" r="5.3" fill="#fff" stroke="#222" stroke-width="1.1"/><circle cx="9.5" cy="9.5" r="2.2" fill="none" stroke="#222" stroke-width="1.3"/></svg>
<div style="position:absolute;left:435px;top:12px;font-size:14px;line-height:14px;color:#1b1b1b;font-weight:normal;white-space:nowrap;-webkit-text-stroke:0.25px #1b1b1b">Settings</div>
<div style="position:absolute;left:1689px;top:18px;width:12px;height:12px;border:2px solid #111"></div>
<div style="position:absolute;left:1709px;top:18px;width:12px;height:12px;border:2px solid #111"></div>
<div style="position:absolute;left:1729px;top:18px;width:12px;height:12px;border:2px solid #111"></div>
<div style="position:absolute;left:1789px;top:18px;width:1.5px;height:10px;background:#111"></div>
<div style="position:absolute;left:1817px;top:15px;font-size:14px;line-height:14px;color:#111;font-weight:bold;white-space:nowrap;-webkit-text-stroke:0.25px #111">24</div>
<div style="position:absolute;left:1850px;top:14px;font-size:13px;line-height:13px;color:#111;font-weight:normal;white-space:nowrap;-webkit-text-stroke:0.25px #111">ft</div>
</div>
</body></html>
